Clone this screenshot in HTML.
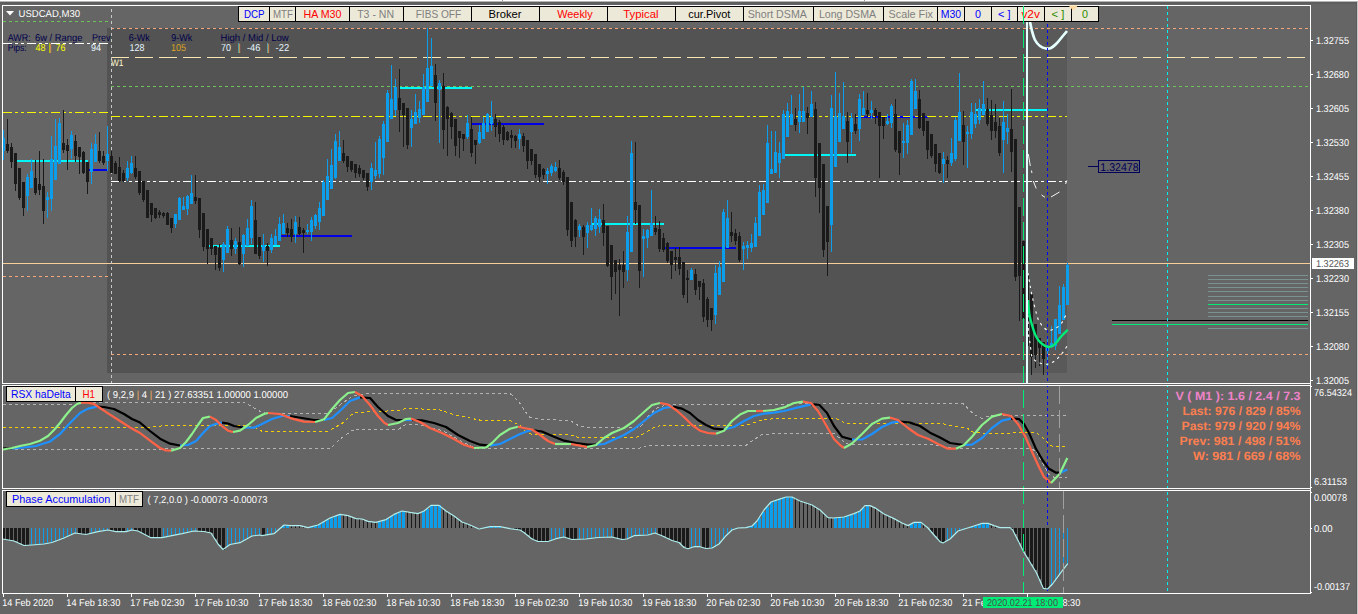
<!DOCTYPE html>
<html><head><meta charset="utf-8"><title>USDCAD,M30</title>
<style>html,body{margin:0;padding:0;background:#656565;overflow:hidden}svg{display:block}text{white-space:pre}</style></head>
<body>
<svg width="1358" height="614" viewBox="0 0 1358 614" font-family='"Liberation Sans", Arial, sans-serif'>
<g shape-rendering="crispEdges">
<rect x="0" y="0" width="1358" height="614" fill="#656565" />
<rect x="0" y="0" width="1358" height="1" fill="#FFFFFF" />
<rect x="0" y="1" width="1358" height="1" fill="#B4B4B4" />
<rect x="0" y="2" width="1358" height="2" fill="#5E5E5E" />
<rect x="502" y="0" width="1" height="1" fill="#999" />
<rect x="864" y="0" width="1" height="1" fill="#999" />
<rect x="1356" y="2" width="1" height="612" fill="#5A5A5A" />
<rect x="1357" y="2" width="1" height="612" fill="#C8C8C8" />
<rect x="107" y="28" width="921" height="345" fill="#535353" />
<rect x="1028" y="28" width="39" height="345" fill="#595959" />
<rect x="17" y="160" width="71" height="2" fill="#00F6F6" />
<rect x="88" y="169" width="19" height="2" fill="#0000E6" />
<rect x="208" y="245" width="72" height="2" fill="#00F6F6" />
<rect x="280" y="235" width="72" height="2" fill="#0000E6" />
<rect x="400" y="87" width="72" height="2" fill="#00F6F6" />
<rect x="472" y="123" width="72" height="2" fill="#0000E6" />
<rect x="591" y="223" width="73" height="2" fill="#00F6F6" />
<rect x="664" y="247" width="72" height="2" fill="#0000E6" />
<rect x="785" y="154" width="71" height="2" fill="#00F6F6" />
<rect x="856" y="116" width="72" height="2" fill="#0000E6" />
<rect x="976" y="109" width="71" height="2" fill="#00F6F6" />
<line x1="3" y1="21.5" x2="108" y2="21.5" stroke="#6CC45A" stroke-width="1" stroke-dasharray="3 3"/>
<line x1="3" y1="43.5" x2="108" y2="43.5" stroke="#FFFFFF" stroke-width="1" stroke-dasharray="9 3 3 3 3 3"/>
<line x1="3" y1="112.5" x2="108" y2="112.5" stroke="#F5F500" stroke-width="1" stroke-dasharray="9 3 3 3 3 3"/>
<line x1="3" y1="276.5" x2="108" y2="276.5" stroke="#F4A77C" stroke-width="1" stroke-dasharray="3 3"/>
<line x1="111" y1="28.5" x2="1310" y2="28.5" stroke="#F4A77C" stroke-width="1" stroke-dasharray="3 3"/>
<line x1="111" y1="57.5" x2="1310" y2="57.5" stroke="#F5E6B4" stroke-width="1" stroke-dasharray="18 6"/>
<line x1="111" y1="86.5" x2="1310" y2="86.5" stroke="#6CC45A" stroke-width="1" stroke-dasharray="3 3"/>
<line x1="111" y1="116.5" x2="1067" y2="116.5" stroke="#F5F500" stroke-width="1" stroke-dasharray="9 3 3 3 3 3"/>
<line x1="111" y1="181.5" x2="1067" y2="181.5" stroke="#FFFFFF" stroke-width="1" stroke-dasharray="9 3 3 3 3 3"/>
<line x1="111" y1="354.5" x2="1310" y2="354.5" stroke="#F4A77C" stroke-width="1" stroke-dasharray="3 3"/>
<line x1="3" y1="263.5" x2="1310" y2="263.5" stroke="#F8CE98" stroke-width="1"/>
<line x1="111.5" y1="9" x2="111.5" y2="383" stroke="#C8C8C8" stroke-width="1" stroke-dasharray="3 3"/>
<rect x="3" y="130" width="1" height="30" fill="#0C9DEB" />
<rect x="3" y="138" width="2" height="13" fill="#0C9DEB" />
<rect x="7" y="119" width="1" height="34" fill="#1A1A1A" />
<rect x="6" y="144" width="3" height="7" fill="#1A1A1A" />
<rect x="11" y="143" width="1" height="25" fill="#1A1A1A" />
<rect x="10" y="147" width="3" height="15" fill="#1A1A1A" />
<rect x="15" y="153" width="1" height="38" fill="#1A1A1A" />
<rect x="14" y="153" width="3" height="31" fill="#1A1A1A" />
<rect x="19" y="168" width="1" height="32" fill="#1A1A1A" />
<rect x="18" y="168" width="3" height="30" fill="#1A1A1A" />
<rect x="23" y="182" width="1" height="34" fill="#1A1A1A" />
<rect x="22" y="182" width="3" height="26" fill="#1A1A1A" />
<rect x="27" y="174" width="1" height="37" fill="#0C9DEB" />
<rect x="26" y="177" width="3" height="19" fill="#0C9DEB" />
<rect x="31" y="159" width="1" height="29" fill="#0C9DEB" />
<rect x="30" y="171" width="3" height="17" fill="#0C9DEB" />
<rect x="35" y="160" width="1" height="35" fill="#1A1A1A" />
<rect x="34" y="178" width="3" height="15" fill="#1A1A1A" />
<rect x="39" y="151" width="1" height="44" fill="#1A1A1A" />
<rect x="38" y="184" width="3" height="6" fill="#1A1A1A" />
<rect x="43" y="159" width="1" height="65" fill="#1A1A1A" />
<rect x="42" y="186" width="3" height="25" fill="#1A1A1A" />
<rect x="47" y="192" width="1" height="26" fill="#0C9DEB" />
<rect x="46" y="197" width="3" height="3" fill="#0C9DEB" />
<rect x="51" y="136" width="1" height="75" fill="#0C9DEB" />
<rect x="50" y="159" width="3" height="40" fill="#0C9DEB" />
<rect x="55" y="119" width="1" height="61" fill="#0C9DEB" />
<rect x="54" y="146" width="3" height="34" fill="#0C9DEB" />
<rect x="59" y="118" width="1" height="46" fill="#0C9DEB" />
<rect x="58" y="123" width="3" height="41" fill="#0C9DEB" />
<rect x="63" y="110" width="1" height="43" fill="#1A1A1A" />
<rect x="62" y="143" width="3" height="7" fill="#1A1A1A" />
<rect x="67" y="139" width="1" height="31" fill="#1A1A1A" />
<rect x="66" y="145" width="3" height="6" fill="#1A1A1A" />
<rect x="71" y="131" width="1" height="28" fill="#0C9DEB" />
<rect x="70" y="135" width="3" height="14" fill="#0C9DEB" />
<rect x="75" y="135" width="1" height="27" fill="#1A1A1A" />
<rect x="74" y="141" width="3" height="15" fill="#1A1A1A" />
<rect x="79" y="147" width="1" height="27" fill="#1A1A1A" />
<rect x="78" y="147" width="3" height="10" fill="#1A1A1A" />
<rect x="83" y="151" width="1" height="23" fill="#1A1A1A" />
<rect x="82" y="152" width="3" height="21" fill="#1A1A1A" />
<rect x="87" y="162" width="1" height="32" fill="#1A1A1A" />
<rect x="86" y="162" width="3" height="20" fill="#1A1A1A" />
<rect x="91" y="143" width="1" height="41" fill="#0C9DEB" />
<rect x="90" y="149" width="3" height="23" fill="#0C9DEB" />
<rect x="95" y="134" width="1" height="28" fill="#0C9DEB" />
<rect x="94" y="144" width="3" height="18" fill="#0C9DEB" />
<rect x="99" y="132" width="1" height="31" fill="#1A1A1A" />
<rect x="98" y="151" width="3" height="10" fill="#1A1A1A" />
<rect x="103" y="151" width="1" height="14" fill="#1A1A1A" />
<rect x="102" y="156" width="3" height="7" fill="#1A1A1A" />
<rect x="107" y="126" width="1" height="45" fill="#0C9DEB" />
<rect x="106" y="154" width="3" height="7" fill="#0C9DEB" />
<rect x="111" y="151" width="1" height="22" fill="#1A1A1A" />
<rect x="110" y="156" width="3" height="17" fill="#1A1A1A" />
<rect x="115" y="161" width="1" height="13" fill="#1A1A1A" />
<rect x="114" y="163" width="3" height="11" fill="#1A1A1A" />
<rect x="119" y="157" width="1" height="25" fill="#1A1A1A" />
<rect x="118" y="167" width="3" height="14" fill="#1A1A1A" />
<rect x="123" y="170" width="1" height="12" fill="#1A1A1A" />
<rect x="122" y="173" width="3" height="8" fill="#1A1A1A" />
<rect x="127" y="161" width="1" height="20" fill="#0C9DEB" />
<rect x="126" y="168" width="3" height="10" fill="#0C9DEB" />
<rect x="131" y="156" width="1" height="18" fill="#0C9DEB" />
<rect x="130" y="163" width="3" height="10" fill="#0C9DEB" />
<rect x="135" y="156" width="1" height="23" fill="#1A1A1A" />
<rect x="134" y="168" width="3" height="9" fill="#1A1A1A" />
<rect x="139" y="171" width="1" height="24" fill="#1A1A1A" />
<rect x="138" y="171" width="3" height="22" fill="#1A1A1A" />
<rect x="143" y="181" width="1" height="21" fill="#1A1A1A" />
<rect x="142" y="181" width="3" height="19" fill="#1A1A1A" />
<rect x="147" y="190" width="1" height="28" fill="#1A1A1A" />
<rect x="146" y="190" width="3" height="28" fill="#1A1A1A" />
<rect x="151" y="203" width="1" height="19" fill="#1A1A1A" />
<rect x="150" y="203" width="3" height="12" fill="#1A1A1A" />
<rect x="155" y="208" width="1" height="11" fill="#1A1A1A" />
<rect x="154" y="208" width="3" height="10" fill="#1A1A1A" />
<rect x="159" y="210" width="1" height="8" fill="#1A1A1A" />
<rect x="158" y="212" width="3" height="3" fill="#1A1A1A" />
<rect x="163" y="212" width="1" height="6" fill="#1A1A1A" />
<rect x="162" y="213" width="3" height="3" fill="#1A1A1A" />
<rect x="167" y="212" width="1" height="13" fill="#1A1A1A" />
<rect x="166" y="213" width="3" height="12" fill="#1A1A1A" />
<rect x="171" y="218" width="1" height="15" fill="#1A1A1A" />
<rect x="170" y="218" width="3" height="10" fill="#1A1A1A" />
<rect x="175" y="214" width="1" height="14" fill="#0C9DEB" />
<rect x="174" y="214" width="3" height="10" fill="#0C9DEB" />
<rect x="179" y="197" width="1" height="23" fill="#0C9DEB" />
<rect x="178" y="198" width="3" height="22" fill="#0C9DEB" />
<rect x="183" y="197" width="1" height="13" fill="#0C9DEB" />
<rect x="182" y="206" width="3" height="4" fill="#0C9DEB" />
<rect x="187" y="195" width="1" height="20" fill="#0C9DEB" />
<rect x="186" y="196" width="3" height="13" fill="#0C9DEB" />
<rect x="191" y="175" width="1" height="29" fill="#0C9DEB" />
<rect x="190" y="193" width="3" height="11" fill="#0C9DEB" />
<rect x="195" y="175" width="1" height="29" fill="#1A1A1A" />
<rect x="194" y="197" width="3" height="4" fill="#1A1A1A" />
<rect x="199" y="198" width="1" height="40" fill="#1A1A1A" />
<rect x="198" y="198" width="3" height="32" fill="#1A1A1A" />
<rect x="203" y="213" width="1" height="38" fill="#1A1A1A" />
<rect x="202" y="213" width="3" height="34" fill="#1A1A1A" />
<rect x="207" y="229" width="1" height="35" fill="#1A1A1A" />
<rect x="206" y="229" width="3" height="20" fill="#1A1A1A" />
<rect x="211" y="238" width="1" height="17" fill="#1A1A1A" />
<rect x="210" y="238" width="3" height="11" fill="#1A1A1A" />
<rect x="215" y="246" width="1" height="24" fill="#1A1A1A" />
<rect x="214" y="246" width="3" height="9" fill="#1A1A1A" />
<rect x="219" y="244" width="1" height="27" fill="#1A1A1A" />
<rect x="218" y="248" width="3" height="20" fill="#1A1A1A" />
<rect x="223" y="242" width="1" height="30" fill="#0C9DEB" />
<rect x="222" y="244" width="3" height="16" fill="#0C9DEB" />
<rect x="227" y="226" width="1" height="27" fill="#0C9DEB" />
<rect x="226" y="229" width="3" height="24" fill="#0C9DEB" />
<rect x="231" y="228" width="1" height="28" fill="#1A1A1A" />
<rect x="230" y="240" width="3" height="9" fill="#1A1A1A" />
<rect x="235" y="238" width="1" height="16" fill="#0C9DEB" />
<rect x="234" y="241" width="3" height="8" fill="#0C9DEB" />
<rect x="239" y="227" width="1" height="38" fill="#1A1A1A" />
<rect x="238" y="242" width="3" height="22" fill="#1A1A1A" />
<rect x="243" y="234" width="1" height="33" fill="#0C9DEB" />
<rect x="242" y="235" width="3" height="19" fill="#0C9DEB" />
<rect x="247" y="219" width="1" height="27" fill="#0C9DEB" />
<rect x="246" y="228" width="3" height="18" fill="#0C9DEB" />
<rect x="251" y="200" width="1" height="44" fill="#0C9DEB" />
<rect x="250" y="206" width="3" height="32" fill="#0C9DEB" />
<rect x="255" y="202" width="1" height="52" fill="#1A1A1A" />
<rect x="254" y="220" width="3" height="34" fill="#1A1A1A" />
<rect x="259" y="237" width="1" height="22" fill="#1A1A1A" />
<rect x="258" y="237" width="3" height="19" fill="#1A1A1A" />
<rect x="263" y="234" width="1" height="28" fill="#0C9DEB" />
<rect x="262" y="245" width="3" height="6" fill="#0C9DEB" />
<rect x="267" y="243" width="1" height="23" fill="#1A1A1A" />
<rect x="266" y="246" width="3" height="5" fill="#1A1A1A" />
<rect x="271" y="234" width="1" height="19" fill="#0C9DEB" />
<rect x="270" y="238" width="3" height="12" fill="#0C9DEB" />
<rect x="275" y="229" width="1" height="16" fill="#0C9DEB" />
<rect x="274" y="236" width="3" height="9" fill="#0C9DEB" />
<rect x="279" y="217" width="1" height="24" fill="#0C9DEB" />
<rect x="278" y="224" width="3" height="17" fill="#0C9DEB" />
<rect x="283" y="214" width="1" height="20" fill="#0C9DEB" />
<rect x="282" y="223" width="3" height="11" fill="#0C9DEB" />
<rect x="287" y="223" width="1" height="14" fill="#1A1A1A" />
<rect x="286" y="228" width="3" height="5" fill="#1A1A1A" />
<rect x="291" y="219" width="1" height="23" fill="#1A1A1A" />
<rect x="290" y="229" width="3" height="8" fill="#1A1A1A" />
<rect x="295" y="216" width="1" height="27" fill="#0C9DEB" />
<rect x="294" y="222" width="3" height="12" fill="#0C9DEB" />
<rect x="299" y="217" width="1" height="18" fill="#1A1A1A" />
<rect x="298" y="227" width="3" height="7" fill="#1A1A1A" />
<rect x="303" y="228" width="1" height="25" fill="#1A1A1A" />
<rect x="302" y="230" width="3" height="3" fill="#1A1A1A" />
<rect x="307" y="224" width="1" height="10" fill="#0C9DEB" />
<rect x="306" y="230" width="3" height="2" fill="#0C9DEB" />
<rect x="311" y="217" width="1" height="24" fill="#0C9DEB" />
<rect x="310" y="220" width="3" height="12" fill="#0C9DEB" />
<rect x="315" y="214" width="1" height="15" fill="#0C9DEB" />
<rect x="314" y="215" width="3" height="11" fill="#0C9DEB" />
<rect x="319" y="202" width="1" height="28" fill="#0C9DEB" />
<rect x="318" y="208" width="3" height="14" fill="#0C9DEB" />
<rect x="323" y="180" width="1" height="36" fill="#0C9DEB" />
<rect x="322" y="182" width="3" height="34" fill="#0C9DEB" />
<rect x="327" y="159" width="1" height="41" fill="#0C9DEB" />
<rect x="326" y="176" width="3" height="24" fill="#0C9DEB" />
<rect x="331" y="149" width="1" height="40" fill="#0C9DEB" />
<rect x="330" y="165" width="3" height="24" fill="#0C9DEB" />
<rect x="335" y="134" width="1" height="45" fill="#0C9DEB" />
<rect x="334" y="141" width="3" height="37" fill="#0C9DEB" />
<rect x="339" y="131" width="1" height="30" fill="#0C9DEB" />
<rect x="338" y="147" width="3" height="14" fill="#0C9DEB" />
<rect x="343" y="140" width="1" height="23" fill="#1A1A1A" />
<rect x="342" y="153" width="3" height="8" fill="#1A1A1A" />
<rect x="347" y="156" width="1" height="16" fill="#1A1A1A" />
<rect x="346" y="156" width="3" height="11" fill="#1A1A1A" />
<rect x="351" y="161" width="1" height="11" fill="#1A1A1A" />
<rect x="350" y="161" width="3" height="9" fill="#1A1A1A" />
<rect x="355" y="164" width="1" height="14" fill="#1A1A1A" />
<rect x="354" y="164" width="3" height="9" fill="#1A1A1A" />
<rect x="359" y="165" width="1" height="12" fill="#1A1A1A" />
<rect x="358" y="168" width="3" height="6" fill="#1A1A1A" />
<rect x="363" y="170" width="1" height="10" fill="#1A1A1A" />
<rect x="362" y="170" width="3" height="8" fill="#1A1A1A" />
<rect x="367" y="173" width="1" height="18" fill="#1A1A1A" />
<rect x="366" y="173" width="3" height="14" fill="#1A1A1A" />
<rect x="371" y="163" width="1" height="27" fill="#0C9DEB" />
<rect x="370" y="168" width="3" height="14" fill="#0C9DEB" />
<rect x="375" y="142" width="1" height="37" fill="#0C9DEB" />
<rect x="374" y="170" width="3" height="6" fill="#0C9DEB" />
<rect x="379" y="136" width="1" height="42" fill="#0C9DEB" />
<rect x="378" y="139" width="3" height="35" fill="#0C9DEB" />
<rect x="383" y="121" width="1" height="54" fill="#0C9DEB" />
<rect x="382" y="124" width="3" height="34" fill="#0C9DEB" />
<rect x="387" y="90" width="1" height="52" fill="#0C9DEB" />
<rect x="386" y="93" width="3" height="49" fill="#0C9DEB" />
<rect x="391" y="65" width="1" height="54" fill="#0C9DEB" />
<rect x="390" y="99" width="3" height="20" fill="#0C9DEB" />
<rect x="395" y="79" width="1" height="37" fill="#0C9DEB" />
<rect x="394" y="87" width="3" height="23" fill="#0C9DEB" />
<rect x="399" y="69" width="1" height="63" fill="#1A1A1A" />
<rect x="398" y="98" width="3" height="12" fill="#1A1A1A" />
<rect x="403" y="103" width="1" height="44" fill="#1A1A1A" />
<rect x="402" y="103" width="3" height="12" fill="#1A1A1A" />
<rect x="407" y="108" width="1" height="41" fill="#1A1A1A" />
<rect x="406" y="108" width="3" height="37" fill="#1A1A1A" />
<rect x="411" y="110" width="1" height="37" fill="#0C9DEB" />
<rect x="410" y="119" width="3" height="9" fill="#0C9DEB" />
<rect x="415" y="94" width="1" height="30" fill="#0C9DEB" />
<rect x="414" y="112" width="3" height="12" fill="#0C9DEB" />
<rect x="419" y="101" width="1" height="22" fill="#0C9DEB" />
<rect x="418" y="109" width="3" height="9" fill="#0C9DEB" />
<rect x="423" y="74" width="1" height="41" fill="#0C9DEB" />
<rect x="422" y="87" width="3" height="28" fill="#0C9DEB" />
<rect x="427" y="28" width="1" height="74" fill="#0C9DEB" />
<rect x="426" y="68" width="3" height="34" fill="#0C9DEB" />
<rect x="431" y="38" width="1" height="48" fill="#0C9DEB" />
<rect x="430" y="66" width="3" height="20" fill="#0C9DEB" />
<rect x="435" y="64" width="1" height="57" fill="#1A1A1A" />
<rect x="434" y="75" width="3" height="28" fill="#1A1A1A" />
<rect x="439" y="80" width="1" height="63" fill="#0C9DEB" />
<rect x="438" y="83" width="3" height="7" fill="#0C9DEB" />
<rect x="443" y="73" width="1" height="76" fill="#1A1A1A" />
<rect x="442" y="86" width="3" height="44" fill="#1A1A1A" />
<rect x="447" y="106" width="1" height="50" fill="#1A1A1A" />
<rect x="446" y="107" width="3" height="12" fill="#1A1A1A" />
<rect x="451" y="112" width="1" height="27" fill="#1A1A1A" />
<rect x="450" y="113" width="3" height="14" fill="#1A1A1A" />
<rect x="455" y="119" width="1" height="37" fill="#1A1A1A" />
<rect x="454" y="119" width="3" height="27" fill="#1A1A1A" />
<rect x="459" y="131" width="1" height="27" fill="#1A1A1A" />
<rect x="458" y="131" width="3" height="7" fill="#1A1A1A" />
<rect x="463" y="134" width="1" height="17" fill="#1A1A1A" />
<rect x="462" y="134" width="3" height="5" fill="#1A1A1A" />
<rect x="467" y="115" width="1" height="24" fill="#0C9DEB" />
<rect x="466" y="123" width="3" height="14" fill="#0C9DEB" />
<rect x="471" y="117" width="1" height="40" fill="#1A1A1A" />
<rect x="470" y="129" width="3" height="24" fill="#1A1A1A" />
<rect x="475" y="140" width="1" height="24" fill="#1A1A1A" />
<rect x="474" y="140" width="3" height="5" fill="#1A1A1A" />
<rect x="479" y="125" width="1" height="19" fill="#0C9DEB" />
<rect x="478" y="132" width="3" height="11" fill="#0C9DEB" />
<rect x="483" y="117" width="1" height="22" fill="#0C9DEB" />
<rect x="482" y="123" width="3" height="16" fill="#0C9DEB" />
<rect x="487" y="113" width="1" height="19" fill="#0C9DEB" />
<rect x="486" y="114" width="3" height="18" fill="#0C9DEB" />
<rect x="491" y="101" width="1" height="30" fill="#0C9DEB" />
<rect x="490" y="117" width="3" height="7" fill="#0C9DEB" />
<rect x="495" y="114" width="1" height="23" fill="#1A1A1A" />
<rect x="494" y="119" width="3" height="8" fill="#1A1A1A" />
<rect x="499" y="120" width="1" height="22" fill="#1A1A1A" />
<rect x="498" y="122" width="3" height="12" fill="#1A1A1A" />
<rect x="503" y="125" width="1" height="20" fill="#1A1A1A" />
<rect x="502" y="127" width="3" height="13" fill="#1A1A1A" />
<rect x="507" y="131" width="1" height="10" fill="#1A1A1A" />
<rect x="506" y="132" width="3" height="8" fill="#1A1A1A" />
<rect x="511" y="130" width="1" height="18" fill="#1A1A1A" />
<rect x="510" y="135" width="3" height="3" fill="#1A1A1A" />
<rect x="515" y="135" width="1" height="13" fill="#1A1A1A" />
<rect x="514" y="136" width="3" height="5" fill="#1A1A1A" />
<rect x="519" y="129" width="1" height="20" fill="#0C9DEB" />
<rect x="518" y="134" width="3" height="5" fill="#0C9DEB" />
<rect x="523" y="133" width="1" height="19" fill="#1A1A1A" />
<rect x="522" y="136" width="3" height="10" fill="#1A1A1A" />
<rect x="527" y="140" width="1" height="29" fill="#1A1A1A" />
<rect x="526" y="140" width="3" height="21" fill="#1A1A1A" />
<rect x="531" y="149" width="1" height="16" fill="#1A1A1A" />
<rect x="530" y="149" width="3" height="12" fill="#1A1A1A" />
<rect x="535" y="154" width="1" height="24" fill="#1A1A1A" />
<rect x="534" y="154" width="3" height="21" fill="#1A1A1A" />
<rect x="539" y="164" width="1" height="18" fill="#1A1A1A" />
<rect x="538" y="164" width="3" height="13" fill="#1A1A1A" />
<rect x="543" y="168" width="1" height="11" fill="#1A1A1A" />
<rect x="542" y="169" width="3" height="6" fill="#1A1A1A" />
<rect x="547" y="168" width="1" height="16" fill="#0C9DEB" />
<rect x="546" y="171" width="3" height="3" fill="#0C9DEB" />
<rect x="551" y="164" width="1" height="12" fill="#0C9DEB" />
<rect x="550" y="166" width="3" height="7" fill="#0C9DEB" />
<rect x="555" y="162" width="1" height="10" fill="#0C9DEB" />
<rect x="554" y="167" width="3" height="4" fill="#0C9DEB" />
<rect x="559" y="160" width="1" height="20" fill="#1A1A1A" />
<rect x="558" y="168" width="3" height="10" fill="#1A1A1A" />
<rect x="563" y="170" width="1" height="15" fill="#1A1A1A" />
<rect x="562" y="172" width="3" height="10" fill="#1A1A1A" />
<rect x="567" y="177" width="1" height="59" fill="#1A1A1A" />
<rect x="566" y="177" width="3" height="53" fill="#1A1A1A" />
<rect x="571" y="202" width="1" height="45" fill="#1A1A1A" />
<rect x="570" y="202" width="3" height="39" fill="#1A1A1A" />
<rect x="575" y="219" width="1" height="28" fill="#1A1A1A" />
<rect x="574" y="220" width="3" height="17" fill="#1A1A1A" />
<rect x="579" y="224" width="1" height="13" fill="#0C9DEB" />
<rect x="578" y="226" width="3" height="4" fill="#0C9DEB" />
<rect x="583" y="225" width="1" height="30" fill="#1A1A1A" />
<rect x="582" y="227" width="3" height="10" fill="#1A1A1A" />
<rect x="587" y="222" width="1" height="26" fill="#0C9DEB" />
<rect x="586" y="225" width="3" height="8" fill="#0C9DEB" />
<rect x="591" y="208" width="1" height="23" fill="#0C9DEB" />
<rect x="590" y="225" width="3" height="5" fill="#0C9DEB" />
<rect x="595" y="216" width="1" height="20" fill="#0C9DEB" />
<rect x="594" y="218" width="3" height="11" fill="#0C9DEB" />
<rect x="599" y="209" width="1" height="24" fill="#0C9DEB" />
<rect x="598" y="219" width="3" height="8" fill="#0C9DEB" />
<rect x="603" y="204" width="1" height="42" fill="#1A1A1A" />
<rect x="602" y="220" width="3" height="13" fill="#1A1A1A" />
<rect x="607" y="226" width="1" height="41" fill="#1A1A1A" />
<rect x="606" y="226" width="3" height="40" fill="#1A1A1A" />
<rect x="611" y="245" width="1" height="55" fill="#1A1A1A" />
<rect x="610" y="245" width="3" height="32" fill="#1A1A1A" />
<rect x="615" y="260" width="1" height="34" fill="#1A1A1A" />
<rect x="614" y="260" width="3" height="12" fill="#1A1A1A" />
<rect x="619" y="259" width="1" height="57" fill="#1A1A1A" />
<rect x="618" y="265" width="3" height="5" fill="#1A1A1A" />
<rect x="623" y="251" width="1" height="37" fill="#1A1A1A" />
<rect x="622" y="265" width="3" height="7" fill="#1A1A1A" />
<rect x="627" y="216" width="1" height="65" fill="#0C9DEB" />
<rect x="626" y="232" width="3" height="38" fill="#0C9DEB" />
<rect x="631" y="141" width="1" height="111" fill="#0C9DEB" />
<rect x="630" y="153" width="3" height="99" fill="#0C9DEB" />
<rect x="635" y="142" width="1" height="82" fill="#1A1A1A" />
<rect x="634" y="202" width="3" height="8" fill="#1A1A1A" />
<rect x="639" y="205" width="1" height="83" fill="#1A1A1A" />
<rect x="638" y="205" width="3" height="66" fill="#1A1A1A" />
<rect x="643" y="229" width="1" height="48" fill="#0C9DEB" />
<rect x="642" y="236" width="3" height="3" fill="#0C9DEB" />
<rect x="647" y="229" width="1" height="19" fill="#0C9DEB" />
<rect x="646" y="230" width="3" height="8" fill="#0C9DEB" />
<rect x="651" y="190" width="1" height="46" fill="#0C9DEB" />
<rect x="650" y="223" width="3" height="13" fill="#0C9DEB" />
<rect x="655" y="216" width="1" height="19" fill="#1A1A1A" />
<rect x="654" y="228" width="3" height="4" fill="#1A1A1A" />
<rect x="659" y="221" width="1" height="31" fill="#1A1A1A" />
<rect x="658" y="229" width="3" height="20" fill="#1A1A1A" />
<rect x="663" y="233" width="1" height="19" fill="#1A1A1A" />
<rect x="662" y="238" width="3" height="12" fill="#1A1A1A" />
<rect x="667" y="242" width="1" height="21" fill="#1A1A1A" />
<rect x="666" y="243" width="3" height="18" fill="#1A1A1A" />
<rect x="671" y="251" width="1" height="28" fill="#1A1A1A" />
<rect x="670" y="251" width="3" height="14" fill="#1A1A1A" />
<rect x="675" y="248" width="1" height="23" fill="#1A1A1A" />
<rect x="674" y="257" width="3" height="3" fill="#1A1A1A" />
<rect x="679" y="247" width="1" height="28" fill="#1A1A1A" />
<rect x="678" y="257" width="3" height="12" fill="#1A1A1A" />
<rect x="683" y="262" width="1" height="36" fill="#1A1A1A" />
<rect x="682" y="262" width="3" height="33" fill="#1A1A1A" />
<rect x="687" y="270" width="1" height="33" fill="#1A1A1A" />
<rect x="686" y="278" width="3" height="2" fill="#1A1A1A" />
<rect x="691" y="268" width="1" height="12" fill="#0C9DEB" />
<rect x="690" y="270" width="3" height="10" fill="#0C9DEB" />
<rect x="695" y="269" width="1" height="26" fill="#1A1A1A" />
<rect x="694" y="274" width="3" height="16" fill="#1A1A1A" />
<rect x="699" y="281" width="1" height="19" fill="#1A1A1A" />
<rect x="698" y="281" width="3" height="6" fill="#1A1A1A" />
<rect x="703" y="279" width="1" height="43" fill="#1A1A1A" />
<rect x="702" y="283" width="3" height="34" fill="#1A1A1A" />
<rect x="707" y="297" width="1" height="30" fill="#1A1A1A" />
<rect x="706" y="299" width="3" height="21" fill="#1A1A1A" />
<rect x="711" y="308" width="1" height="23" fill="#1A1A1A" />
<rect x="710" y="308" width="3" height="12" fill="#1A1A1A" />
<rect x="715" y="265" width="1" height="59" fill="#0C9DEB" />
<rect x="714" y="273" width="3" height="42" fill="#0C9DEB" />
<rect x="719" y="261" width="1" height="34" fill="#0C9DEB" />
<rect x="718" y="267" width="3" height="28" fill="#0C9DEB" />
<rect x="723" y="209" width="1" height="73" fill="#0C9DEB" />
<rect x="722" y="212" width="3" height="70" fill="#0C9DEB" />
<rect x="727" y="200" width="1" height="48" fill="#0C9DEB" />
<rect x="726" y="218" width="3" height="30" fill="#0C9DEB" />
<rect x="731" y="212" width="1" height="30" fill="#1A1A1A" />
<rect x="730" y="232" width="3" height="4" fill="#1A1A1A" />
<rect x="735" y="229" width="1" height="16" fill="#1A1A1A" />
<rect x="734" y="233" width="3" height="8" fill="#1A1A1A" />
<rect x="739" y="232" width="1" height="30" fill="#1A1A1A" />
<rect x="738" y="236" width="3" height="24" fill="#1A1A1A" />
<rect x="743" y="242" width="1" height="28" fill="#0C9DEB" />
<rect x="742" y="246" width="3" height="3" fill="#0C9DEB" />
<rect x="747" y="241" width="1" height="18" fill="#0C9DEB" />
<rect x="746" y="245" width="3" height="3" fill="#0C9DEB" />
<rect x="751" y="234" width="1" height="18" fill="#0C9DEB" />
<rect x="750" y="243" width="3" height="5" fill="#0C9DEB" />
<rect x="755" y="217" width="1" height="30" fill="#0C9DEB" />
<rect x="754" y="223" width="3" height="24" fill="#0C9DEB" />
<rect x="759" y="185" width="1" height="51" fill="#0C9DEB" />
<rect x="758" y="192" width="3" height="44" fill="#0C9DEB" />
<rect x="763" y="184" width="1" height="31" fill="#0C9DEB" />
<rect x="762" y="190" width="3" height="25" fill="#0C9DEB" />
<rect x="767" y="125" width="1" height="78" fill="#0C9DEB" />
<rect x="766" y="143" width="3" height="60" fill="#0C9DEB" />
<rect x="771" y="131" width="1" height="43" fill="#0C9DEB" />
<rect x="770" y="169" width="3" height="5" fill="#0C9DEB" />
<rect x="775" y="131" width="1" height="42" fill="#0C9DEB" />
<rect x="774" y="152" width="3" height="21" fill="#0C9DEB" />
<rect x="779" y="142" width="1" height="36" fill="#0C9DEB" />
<rect x="778" y="153" width="3" height="10" fill="#0C9DEB" />
<rect x="783" y="110" width="1" height="49" fill="#0C9DEB" />
<rect x="782" y="114" width="3" height="45" fill="#0C9DEB" />
<rect x="787" y="103" width="1" height="34" fill="#0C9DEB" />
<rect x="786" y="111" width="3" height="26" fill="#0C9DEB" />
<rect x="791" y="95" width="1" height="30" fill="#0C9DEB" />
<rect x="790" y="114" width="3" height="11" fill="#0C9DEB" />
<rect x="795" y="108" width="1" height="23" fill="#1A1A1A" />
<rect x="794" y="119" width="3" height="6" fill="#1A1A1A" />
<rect x="799" y="94" width="1" height="39" fill="#0C9DEB" />
<rect x="798" y="111" width="3" height="11" fill="#0C9DEB" />
<rect x="803" y="87" width="1" height="35" fill="#0C9DEB" />
<rect x="802" y="111" width="3" height="11" fill="#0C9DEB" />
<rect x="807" y="107" width="1" height="27" fill="#1A1A1A" />
<rect x="806" y="113" width="3" height="5" fill="#1A1A1A" />
<rect x="811" y="91" width="1" height="26" fill="#0C9DEB" />
<rect x="810" y="104" width="3" height="13" fill="#0C9DEB" />
<rect x="815" y="102" width="1" height="95" fill="#1A1A1A" />
<rect x="814" y="109" width="3" height="69" fill="#1A1A1A" />
<rect x="819" y="143" width="1" height="70" fill="#1A1A1A" />
<rect x="818" y="143" width="3" height="45" fill="#1A1A1A" />
<rect x="823" y="164" width="1" height="93" fill="#1A1A1A" />
<rect x="822" y="164" width="3" height="86" fill="#1A1A1A" />
<rect x="827" y="206" width="1" height="70" fill="#1A1A1A" />
<rect x="826" y="206" width="3" height="36" fill="#1A1A1A" />
<rect x="831" y="95" width="1" height="157" fill="#0C9DEB" />
<rect x="830" y="108" width="3" height="117" fill="#0C9DEB" />
<rect x="835" y="72" width="1" height="95" fill="#0C9DEB" />
<rect x="834" y="116" width="3" height="51" fill="#0C9DEB" />
<rect x="839" y="93" width="1" height="49" fill="#0C9DEB" />
<rect x="838" y="113" width="3" height="29" fill="#0C9DEB" />
<rect x="843" y="82" width="1" height="47" fill="#0C9DEB" />
<rect x="842" y="116" width="3" height="13" fill="#0C9DEB" />
<rect x="847" y="112" width="1" height="51" fill="#1A1A1A" />
<rect x="846" y="121" width="3" height="21" fill="#1A1A1A" />
<rect x="851" y="113" width="1" height="40" fill="#0C9DEB" />
<rect x="850" y="118" width="3" height="14" fill="#0C9DEB" />
<rect x="855" y="114" width="1" height="20" fill="#1A1A1A" />
<rect x="854" y="124" width="3" height="7" fill="#1A1A1A" />
<rect x="859" y="94" width="1" height="47" fill="#0C9DEB" />
<rect x="858" y="99" width="3" height="30" fill="#0C9DEB" />
<rect x="863" y="91" width="1" height="24" fill="#0C9DEB" />
<rect x="862" y="108" width="3" height="7" fill="#0C9DEB" />
<rect x="867" y="93" width="1" height="24" fill="#1A1A1A" />
<rect x="866" y="110" width="3" height="4" fill="#1A1A1A" />
<rect x="871" y="101" width="1" height="18" fill="#0C9DEB" />
<rect x="870" y="110" width="3" height="3" fill="#0C9DEB" />
<rect x="875" y="108" width="1" height="16" fill="#1A1A1A" />
<rect x="874" y="110" width="3" height="6" fill="#1A1A1A" />
<rect x="879" y="112" width="1" height="66" fill="#1A1A1A" />
<rect x="878" y="112" width="3" height="14" fill="#1A1A1A" />
<rect x="883" y="117" width="1" height="22" fill="#1A1A1A" />
<rect x="882" y="117" width="3" height="9" fill="#1A1A1A" />
<rect x="887" y="114" width="1" height="11" fill="#0C9DEB" />
<rect x="886" y="121" width="3" height="3" fill="#0C9DEB" />
<rect x="891" y="104" width="1" height="24" fill="#0C9DEB" />
<rect x="890" y="106" width="3" height="17" fill="#0C9DEB" />
<rect x="895" y="99" width="1" height="53" fill="#1A1A1A" />
<rect x="894" y="114" width="3" height="36" fill="#1A1A1A" />
<rect x="899" y="131" width="1" height="44" fill="#1A1A1A" />
<rect x="898" y="131" width="3" height="22" fill="#1A1A1A" />
<rect x="903" y="123" width="1" height="35" fill="#0C9DEB" />
<rect x="902" y="141" width="3" height="2" fill="#0C9DEB" />
<rect x="907" y="120" width="1" height="34" fill="#0C9DEB" />
<rect x="906" y="125" width="3" height="18" fill="#0C9DEB" />
<rect x="911" y="79" width="1" height="56" fill="#0C9DEB" />
<rect x="910" y="81" width="3" height="54" fill="#0C9DEB" />
<rect x="915" y="79" width="1" height="30" fill="#0C9DEB" />
<rect x="914" y="91" width="3" height="18" fill="#0C9DEB" />
<rect x="919" y="90" width="1" height="39" fill="#1A1A1A" />
<rect x="918" y="99" width="3" height="29" fill="#1A1A1A" />
<rect x="923" y="113" width="1" height="23" fill="#1A1A1A" />
<rect x="922" y="113" width="3" height="18" fill="#1A1A1A" />
<rect x="927" y="121" width="1" height="38" fill="#1A1A1A" />
<rect x="926" y="121" width="3" height="29" fill="#1A1A1A" />
<rect x="931" y="134" width="1" height="24" fill="#1A1A1A" />
<rect x="930" y="134" width="3" height="22" fill="#1A1A1A" />
<rect x="935" y="144" width="1" height="28" fill="#1A1A1A" />
<rect x="934" y="144" width="3" height="20" fill="#1A1A1A" />
<rect x="939" y="153" width="1" height="21" fill="#1A1A1A" />
<rect x="938" y="153" width="3" height="20" fill="#1A1A1A" />
<rect x="943" y="152" width="1" height="31" fill="#0C9DEB" />
<rect x="942" y="159" width="3" height="5" fill="#0C9DEB" />
<rect x="947" y="156" width="1" height="22" fill="#1A1A1A" />
<rect x="946" y="160" width="3" height="4" fill="#1A1A1A" />
<rect x="951" y="138" width="1" height="28" fill="#0C9DEB" />
<rect x="950" y="153" width="3" height="10" fill="#0C9DEB" />
<rect x="955" y="117" width="1" height="44" fill="#0C9DEB" />
<rect x="954" y="120" width="3" height="39" fill="#0C9DEB" />
<rect x="959" y="73" width="1" height="68" fill="#0C9DEB" />
<rect x="958" y="112" width="3" height="29" fill="#0C9DEB" />
<rect x="963" y="111" width="1" height="54" fill="#1A1A1A" />
<rect x="962" y="125" width="3" height="17" fill="#1A1A1A" />
<rect x="967" y="126" width="1" height="42" fill="#0C9DEB" />
<rect x="966" y="132" width="3" height="2" fill="#0C9DEB" />
<rect x="971" y="103" width="1" height="36" fill="#0C9DEB" />
<rect x="970" y="112" width="3" height="22" fill="#0C9DEB" />
<rect x="975" y="103" width="1" height="25" fill="#0C9DEB" />
<rect x="974" y="114" width="3" height="10" fill="#0C9DEB" />
<rect x="979" y="99" width="1" height="25" fill="#0C9DEB" />
<rect x="978" y="108" width="3" height="12" fill="#0C9DEB" />
<rect x="983" y="81" width="1" height="34" fill="#0C9DEB" />
<rect x="982" y="104" width="3" height="11" fill="#0C9DEB" />
<rect x="987" y="98" width="1" height="28" fill="#1A1A1A" />
<rect x="986" y="109" width="3" height="15" fill="#1A1A1A" />
<rect x="991" y="100" width="1" height="40" fill="#1A1A1A" />
<rect x="990" y="115" width="3" height="16" fill="#1A1A1A" />
<rect x="995" y="104" width="1" height="34" fill="#1A1A1A" />
<rect x="994" y="122" width="3" height="9" fill="#1A1A1A" />
<rect x="999" y="118" width="1" height="38" fill="#1A1A1A" />
<rect x="998" y="126" width="3" height="27" fill="#1A1A1A" />
<rect x="1003" y="101" width="1" height="72" fill="#0C9DEB" />
<rect x="1002" y="122" width="3" height="18" fill="#0C9DEB" />
<rect x="1007" y="114" width="1" height="30" fill="#0C9DEB" />
<rect x="1006" y="128" width="3" height="4" fill="#0C9DEB" />
<rect x="1011" y="89" width="1" height="83" fill="#1A1A1A" />
<rect x="1010" y="129" width="3" height="23" fill="#1A1A1A" />
<rect x="1015" y="139" width="1" height="142" fill="#1A1A1A" />
<rect x="1014" y="139" width="3" height="138" fill="#1A1A1A" />
<rect x="1019" y="207" width="1" height="114" fill="#1A1A1A" />
<rect x="1018" y="207" width="3" height="69" fill="#1A1A1A" />
<rect x="1023" y="241" width="1" height="90" fill="#1A1A1A" />
<rect x="1022" y="241" width="3" height="78" fill="#1A1A1A" />
<rect x="1027" y="275" width="1" height="78" fill="#1A1A1A" />
<rect x="1026" y="275" width="3" height="71" fill="#1A1A1A" />
<rect x="1031" y="294" width="1" height="81" fill="#1A1A1A" />
<rect x="1030" y="294" width="3" height="63" fill="#1A1A1A" />
<rect x="1035" y="324" width="1" height="44" fill="#1A1A1A" />
<rect x="1034" y="324" width="3" height="31" fill="#1A1A1A" />
<rect x="1039" y="338" width="1" height="28" fill="#1A1A1A" />
<rect x="1038" y="338" width="3" height="10" fill="#1A1A1A" />
<rect x="1043" y="342" width="1" height="33" fill="#1A1A1A" />
<rect x="1042" y="342" width="3" height="17" fill="#1A1A1A" />
<rect x="1047" y="337" width="1" height="29" fill="#0C9DEB" />
<rect x="1046" y="348" width="3" height="3" fill="#0C9DEB" />
<rect x="1051" y="326" width="1" height="21" fill="#0C9DEB" />
<rect x="1050" y="343" width="3" height="4" fill="#0C9DEB" />
<rect x="1055" y="319" width="1" height="31" fill="#0C9DEB" />
<rect x="1054" y="319" width="3" height="27" fill="#0C9DEB" />
<rect x="1059" y="286" width="1" height="48" fill="#0C9DEB" />
<rect x="1058" y="305" width="3" height="29" fill="#0C9DEB" />
<rect x="1063" y="284" width="1" height="36" fill="#0C9DEB" />
<rect x="1062" y="287" width="3" height="33" fill="#0C9DEB" />
<rect x="1067" y="263" width="1" height="42" fill="#0C9DEB" />
<rect x="1066" y="265" width="3" height="40" fill="#0C9DEB" />
<line x1="1208" y1="275.5" x2="1308" y2="275.5" stroke="#7A9292" stroke-width="1"/>
<line x1="1208" y1="279.5" x2="1308" y2="279.5" stroke="#7A9292" stroke-width="1"/>
<line x1="1208" y1="283.5" x2="1308" y2="283.5" stroke="#7A9292" stroke-width="1"/>
<line x1="1208" y1="287.5" x2="1308" y2="287.5" stroke="#7A9292" stroke-width="1"/>
<line x1="1208" y1="291.5" x2="1308" y2="291.5" stroke="#7A9292" stroke-width="1"/>
<line x1="1208" y1="296.5" x2="1308" y2="296.5" stroke="#7A9292" stroke-width="1"/>
<line x1="1208" y1="300.5" x2="1308" y2="300.5" stroke="#7A9292" stroke-width="1"/>
<line x1="1208" y1="308.5" x2="1308" y2="308.5" stroke="#7A9292" stroke-width="1"/>
<line x1="1208" y1="312.5" x2="1308" y2="312.5" stroke="#7A9292" stroke-width="1"/>
<line x1="1208" y1="316.5" x2="1308" y2="316.5" stroke="#7A9292" stroke-width="1"/>
<line x1="1208" y1="328.5" x2="1308" y2="328.5" stroke="#7A9292" stroke-width="1"/>
<line x1="1208" y1="304.5" x2="1308" y2="304.5" stroke="#00EB78" stroke-width="1"/>
<line x1="1112" y1="320.5" x2="1308" y2="320.5" stroke="#000000" stroke-width="1"/>
<line x1="1112" y1="324.5" x2="1308" y2="324.5" stroke="#00EB78" stroke-width="1"/>
</g>
<path d="M1030.0,22.0 C1030.3,23.5 1031.2,28.0 1032.0,31.0 C1032.8,34.0 1033.7,37.5 1035.0,40.0 C1036.3,42.5 1038.2,44.6 1040.0,46.0 C1041.8,47.4 1044.2,48.2 1046.0,48.5 C1047.8,48.8 1049.2,48.9 1051.0,48.0 C1052.8,47.1 1055.2,44.8 1057.0,43.0 C1058.8,41.2 1060.3,39.0 1062.0,37.0 C1063.7,35.0 1066.2,32.0 1067.0,31.0" fill="none" stroke="#E6FFFF" stroke-width="2.7" stroke-linejoin="round" />
<line x1="1028.3" y1="154" x2="1030.3" y2="166" stroke="#F4F4F4" stroke-width="1"/>
<line x1="1031.5" y1="170.5" x2="1031.9" y2="173" stroke="#F4F4F4" stroke-width="1"/>
<line x1="1033.3" y1="181" x2="1036.2" y2="188.5" stroke="#F4F4F4" stroke-width="1"/>
<line x1="1041.5" y1="195" x2="1045" y2="197.3" stroke="#F4F4F4" stroke-width="1"/>
<line x1="1051" y1="197" x2="1059.5" y2="192" stroke="#F4F4F4" stroke-width="1"/>
<line x1="1065.6" y1="184" x2="1066.8" y2="180.5" stroke="#F4F4F4" stroke-width="1"/>
<path d="M1028.0,273.0 C1028.3,275.0 1029.2,280.5 1030.0,285.0 C1030.8,289.5 1031.8,294.6 1033.0,300.0 C1034.2,305.4 1036.5,313.9 1037.5,317.3 C1038.5,320.8 1038.4,319.2 1039.2,320.7 C1040.0,322.2 1041.1,324.8 1042.6,326.4 C1044.1,328.0 1046.3,330.0 1048.3,330.4 C1050.3,330.8 1052.6,329.6 1054.6,328.7 C1056.6,327.8 1058.7,326.4 1060.3,324.7 C1061.9,323.0 1063.2,320.5 1064.3,318.4 C1065.4,316.3 1066.5,313.1 1067.0,312.0" fill="none" stroke="#FFFFFF" stroke-width="1.1" stroke-linejoin="round" stroke-dasharray="2.5 4" />
<path d="M1028.0,315.0 C1028.1,317.9 1028.2,328.9 1028.4,332.7 C1028.6,336.5 1028.7,335.8 1029.0,337.8 C1029.3,339.8 1029.8,341.6 1030.3,344.6 C1030.8,347.6 1030.8,353.2 1031.8,356.0 C1032.8,358.8 1034.6,360.2 1036.4,361.5 C1038.2,362.8 1040.6,363.4 1042.6,363.8 C1044.6,364.2 1046.3,364.5 1048.3,364.0 C1050.3,363.5 1052.6,362.4 1054.6,361.0 C1056.6,359.6 1058.5,357.5 1060.3,355.5 C1062.1,353.5 1064.1,350.6 1065.2,349.0 C1066.3,347.4 1066.7,346.5 1067.0,346.0" fill="none" stroke="#FFFFFF" stroke-width="1.1" stroke-linejoin="round" stroke-dasharray="2.5 4" />
<path d="M1028.0,300.0 C1028.2,302.5 1028.8,310.6 1029.5,315.0 C1030.2,319.4 1031.4,322.9 1032.4,326.4 C1033.5,329.9 1034.5,333.3 1035.8,336.0 C1037.1,338.7 1038.8,340.8 1040.3,342.4 C1041.8,344.0 1043.6,345.0 1044.9,345.8 C1046.2,346.6 1047.0,347.0 1048.3,347.0 C1049.6,347.0 1051.4,346.8 1052.9,345.8 C1054.4,344.8 1056.0,342.9 1057.5,341.2 C1059.0,339.5 1060.3,337.4 1062.0,335.5 C1063.7,333.6 1066.8,330.8 1067.7,329.8" fill="none" stroke="#00EB78" stroke-width="2.4" stroke-linejoin="round" />
<g shape-rendering="crispEdges">
<line x1="1023.5" y1="6" x2="1023.5" y2="593" stroke="#00EB78" stroke-width="1" stroke-dasharray="18 6"/>
<rect x="1026" y="22" width="2" height="362" fill="#E6FFFF" />
<line x1="1047.5" y1="24" x2="1047.5" y2="593" stroke="#0000FF" stroke-width="1" stroke-dasharray="3 3"/>
<line x1="1167.5" y1="6" x2="1167.5" y2="593" stroke="#00F0F0" stroke-width="1" stroke-dasharray="3 3"/>
</g>
<g shape-rendering="crispEdges">
<rect x="0" y="384" width="1311" height="1" fill="#656565" />
<rect x="0" y="489" width="1311" height="1" fill="#656565" />
</g>
<path d="M3.0,404.5 L76.0,404.5 L82.0,402.5 L244.0,402.5 L250.0,405.5 L262.0,412.5 L268.0,413.5 L328.0,413.5 L342.0,403.5 L352.0,396.5 L366.0,393.5 L510.0,393.5 L518.0,400.5 L526.0,412.5 L530.0,417.5 L542.0,419.5 L570.0,420.5 L580.0,426.5 L588.0,427.5 L640.0,427.5 L648.0,416.5 L656.0,408.5 L664.0,405.5 L670.0,404.5 L784.0,404.5 L796.0,403.5 L963.0,403.5 L974.0,414.5 L982.0,418.5 L990.0,415.5 L1067.0,415.5" fill="none" stroke="#B4B4B4" stroke-width="1" stroke-linejoin="round" stroke-linecap="butt" stroke-dasharray="3 3" shape-rendering="crispEdges"/>
<path d="M3.0,449.5 L330.0,448.5 L342.0,437.5 L352.0,430.5 L356.0,429.5 L398.0,429.5 L406.0,424.5 L418.0,424.5 L442.0,430.5 L462.0,441.5 L474.0,447.5 L480.0,448.5 L638.0,448.5 L648.0,445.5 L652.0,445.5 L746.0,445.5 L754.0,439.5 L762.0,434.5 L778.0,433.5 L834.0,433.5 L840.0,438.5 L846.0,443.5 L850.0,444.5 L934.0,444.5 L946.0,447.5 L956.0,448.5 L1027.0,448.5 L1035.6,450.5 L1049.0,474.5 L1054.4,477.5 L1067.0,477.5" fill="none" stroke="#B4B4B4" stroke-width="1" stroke-linejoin="round" stroke-linecap="butt" stroke-dasharray="3 3" shape-rendering="crispEdges"/>
<path d="M3.0,427.5 L140.0,427.5 L160.0,426.5 L162.0,425.5 L200.0,425.5 L244.0,425.5 L258.0,428.5 L262.0,431.5 L328.0,431.5 L342.0,423.5 L354.0,412.5 L398.0,410.5 L406.0,408.5 L438.0,409.5 L454.0,414.5 L472.0,418.5 L482.0,420.5 L510.0,420.5 L520.0,425.5 L524.0,430.5 L532.0,434.5 L570.0,434.5 L578.0,437.5 L636.0,437.5 L644.0,433.5 L652.0,428.5 L660.0,425.5 L746.0,425.5 L754.0,422.5 L764.0,419.5 L778.0,418.5 L836.0,418.5 L844.0,422.5 L846.0,423.5 L942.0,423.5 L956.0,426.5 L966.0,427.5 L974.0,432.5 L986.0,433.5 L1036.0,432.5 L1042.5,437.5 L1048.5,443.5 L1052.7,446.5 L1067.0,446.5" fill="none" stroke="#F5CD00" stroke-width="1" stroke-linejoin="round" stroke-linecap="butt" stroke-dasharray="3 3" shape-rendering="crispEdges"/>
<path d="M3.0,448.5 L12.0,448.5" fill="none" stroke="#000000" stroke-width="2.2" stroke-linejoin="round" stroke-linecap="butt" />
<path d="M12.0,448.5 L24.0,447.5 L36.0,446.0 L50.0,441.5 L60.0,434.0 L70.0,423.0 L80.0,413.0 L88.0,408.6 L97.0,406.6" fill="none" stroke="#1E90FF" stroke-width="2.2" stroke-linejoin="round" stroke-linecap="butt" />
<path d="M97.0,406.6 L104.0,407.0 L114.0,409.0 L124.0,414.0 L132.0,419.0 L140.0,422.6 L150.0,431.0 L160.0,438.7 L170.0,443.7 L180.0,445.5" fill="none" stroke="#000000" stroke-width="2.2" stroke-linejoin="round" stroke-linecap="butt" />
<path d="M180.0,445.5 L188.0,445.0 L196.0,441.0 L204.0,432.0 L210.0,426.0 L217.0,423.6 L222.0,422.6" fill="none" stroke="#1E90FF" stroke-width="2.2" stroke-linejoin="round" stroke-linecap="butt" />
<path d="M222.0,422.6 L228.0,423.5 L234.0,426.0 L243.0,427.5" fill="none" stroke="#000000" stroke-width="2.2" stroke-linejoin="round" stroke-linecap="butt" />
<path d="M243.0,427.5 L254.0,427.7 L262.0,424.0 L272.0,419.0 L282.0,416.0 L290.0,416.0" fill="none" stroke="#1E90FF" stroke-width="2.2" stroke-linejoin="round" stroke-linecap="butt" />
<path d="M290.0,416.0 L302.0,418.0 L314.0,420.0 L324.0,420.0" fill="none" stroke="#000000" stroke-width="2.2" stroke-linejoin="round" stroke-linecap="butt" />
<path d="M324.0,420.0 L332.0,418.0 L342.0,409.0 L350.0,401.0 L360.0,397.4" fill="none" stroke="#1E90FF" stroke-width="2.2" stroke-linejoin="round" stroke-linecap="butt" />
<path d="M360.0,397.4 L370.0,398.0 L378.0,407.0 L388.0,416.0 L396.0,420.0 L404.0,420.0" fill="none" stroke="#000000" stroke-width="2.2" stroke-linejoin="round" stroke-linecap="butt" />
<path d="M404.0,420.0 L412.0,420.0" fill="none" stroke="#1E90FF" stroke-width="2.2" stroke-linejoin="round" stroke-linecap="butt" />
<path d="M412.0,420.0 L422.0,420.4 L434.0,423.0 L446.0,427.0 L458.0,435.0 L470.0,441.0 L480.0,444.7 L490.0,445.7" fill="none" stroke="#000000" stroke-width="2.2" stroke-linejoin="round" stroke-linecap="butt" />
<path d="M490.0,445.7 L500.0,444.0 L510.0,439.0 L520.0,434.0 L528.0,431.0 L532.0,430.0" fill="none" stroke="#1E90FF" stroke-width="2.2" stroke-linejoin="round" stroke-linecap="butt" />
<path d="M532.0,430.0 L542.0,431.5 L554.0,436.7 L564.0,440.7 L576.0,443.0 L588.0,444.7 L596.0,444.7" fill="none" stroke="#000000" stroke-width="2.2" stroke-linejoin="round" stroke-linecap="butt" />
<path d="M596.0,444.7 L604.0,444.0 L614.0,439.5 L624.0,435.0 L634.0,429.0 L644.0,421.0 L654.0,413.0 L664.0,408.0 L673.0,406.6" fill="none" stroke="#1E90FF" stroke-width="2.2" stroke-linejoin="round" stroke-linecap="butt" />
<path d="M673.0,406.6 L682.0,408.6 L690.0,413.0 L698.0,420.0 L706.0,425.0 L714.0,428.7 L724.0,429.5" fill="none" stroke="#000000" stroke-width="2.2" stroke-linejoin="round" stroke-linecap="butt" />
<path d="M724.0,429.5 L734.0,427.0 L744.0,421.0 L754.0,416.0 L764.0,413.6 L774.0,412.6 L784.0,411.0 L798.0,407.4 L811.0,404.4" fill="none" stroke="#1E90FF" stroke-width="2.2" stroke-linejoin="round" stroke-linecap="butt" />
<path d="M811.0,404.4 L819.0,404.6 L827.0,413.0 L834.0,426.0 L842.0,436.7 L852.0,439.5" fill="none" stroke="#000000" stroke-width="2.2" stroke-linejoin="round" stroke-linecap="butt" />
<path d="M852.0,439.5 L862.0,439.5 L872.0,434.0 L882.0,427.0 L892.0,422.6 L900.0,421.5" fill="none" stroke="#1E90FF" stroke-width="2.2" stroke-linejoin="round" stroke-linecap="butt" />
<path d="M900.0,421.5 L910.0,422.6 L920.0,426.0 L930.0,432.7 L940.0,437.5 L950.0,443.0 L964.0,445.0" fill="none" stroke="#000000" stroke-width="2.2" stroke-linejoin="round" stroke-linecap="butt" />
<path d="M964.0,445.0 L972.0,444.7 L982.0,438.0 L992.0,428.0 L1002.0,420.6 L1011.0,418.6" fill="none" stroke="#1E90FF" stroke-width="2.2" stroke-linejoin="round" stroke-linecap="butt" />
<path d="M1011.0,418.6 L1019.0,419.0 L1024.0,424.0 L1029.0,433.0 L1035.6,448.0 L1042.5,460.0 L1049.0,468.8 L1056.0,472.7 L1060.4,472.7" fill="none" stroke="#000000" stroke-width="2.2" stroke-linejoin="round" stroke-linecap="butt" />
<path d="M1060.4,472.7 L1067.3,469.6" fill="none" stroke="#1E90FF" stroke-width="2.2" stroke-linejoin="round" stroke-linecap="butt" />
<path d="M3.0,449.5 L12.0,448.0 L20.0,446.0 L30.0,444.0 L40.0,440.7 L48.0,436.0 L54.0,430.0 L60.0,423.0 L66.0,415.0 L72.0,408.0 L77.0,404.0 L81.0,402.6" fill="none" stroke="#8CF08C" stroke-width="2.2" stroke-linejoin="round" stroke-linecap="butt" />
<path d="M81.0,402.6 L88.0,402.6 L94.0,404.0 L100.0,408.0 L110.0,414.6 L120.0,421.0 L130.0,427.5 L140.0,433.0 L150.0,440.7 L160.0,448.0 L166.0,450.5 L171.0,450.7" fill="none" stroke="#FF6347" stroke-width="2.2" stroke-linejoin="round" stroke-linecap="butt" />
<path d="M171.0,450.7 L180.0,448.0 L186.0,442.0 L192.0,434.0 L198.0,425.0 L203.0,418.0 L210.0,416.6" fill="none" stroke="#8CF08C" stroke-width="2.2" stroke-linejoin="round" stroke-linecap="butt" />
<path d="M210.0,416.6 L216.0,420.0 L222.0,426.0 L228.0,430.7 L233.0,432.0" fill="none" stroke="#FF6347" stroke-width="2.2" stroke-linejoin="round" stroke-linecap="butt" />
<path d="M233.0,432.0 L240.0,430.7 L248.0,425.0 L256.0,418.0 L264.0,414.0 L268.0,413.0" fill="none" stroke="#8CF08C" stroke-width="2.2" stroke-linejoin="round" stroke-linecap="butt" />
<path d="M268.0,413.0 L280.0,414.0 L292.0,418.6 L304.0,421.6 L315.0,422.0" fill="none" stroke="#FF6347" stroke-width="2.2" stroke-linejoin="round" stroke-linecap="butt" />
<path d="M315.0,422.0 L324.0,419.4 L332.0,409.0 L340.0,400.0 L348.0,393.0 L355.0,392.0" fill="none" stroke="#8CF08C" stroke-width="2.2" stroke-linejoin="round" stroke-linecap="butt" />
<path d="M355.0,392.0 L362.0,396.0 L370.0,405.0 L378.0,416.0 L384.0,422.6 L388.0,425.0" fill="none" stroke="#FF6347" stroke-width="2.2" stroke-linejoin="round" stroke-linecap="butt" />
<path d="M388.0,425.0 L398.0,423.0 L406.0,419.0 L411.0,418.6" fill="none" stroke="#8CF08C" stroke-width="2.2" stroke-linejoin="round" stroke-linecap="butt" />
<path d="M411.0,418.6 L420.0,422.0 L430.0,428.0 L442.0,433.0 L454.0,439.0 L464.0,444.7 L474.0,448.0" fill="none" stroke="#FF6347" stroke-width="2.2" stroke-linejoin="round" stroke-linecap="butt" />
<path d="M474.0,448.0 L486.0,447.5 L492.0,443.0 L500.0,435.0 L510.0,428.7 L518.0,426.7" fill="none" stroke="#8CF08C" stroke-width="2.2" stroke-linejoin="round" stroke-linecap="butt" />
<path d="M518.0,426.7 L524.0,428.0 L532.0,429.5 L540.0,435.0 L548.0,441.0 L555.0,444.0" fill="none" stroke="#FF6347" stroke-width="2.2" stroke-linejoin="round" stroke-linecap="butt" />
<path d="M555.0,444.0 L571.0,444.0" fill="none" stroke="#8CF08C" stroke-width="2.2" stroke-linejoin="round" stroke-linecap="butt" />
<path d="M571.0,444.0 L580.0,445.7 L587.0,447.0" fill="none" stroke="#FF6347" stroke-width="2.2" stroke-linejoin="round" stroke-linecap="butt" />
<path d="M587.0,447.0 L596.0,445.0 L604.0,438.0 L612.0,433.0 L624.0,428.0 L634.0,421.0 L644.0,412.0 L652.0,405.0 L660.0,403.0" fill="none" stroke="#8CF08C" stroke-width="2.2" stroke-linejoin="round" stroke-linecap="butt" />
<path d="M660.0,403.0 L668.0,404.6 L676.0,410.0 L684.0,417.0 L692.0,425.0 L700.0,430.7 L708.0,433.0 L716.0,433.7" fill="none" stroke="#FF6347" stroke-width="2.2" stroke-linejoin="round" stroke-linecap="butt" />
<path d="M716.0,433.7 L724.0,430.7 L732.0,421.0 L740.0,414.6 L748.0,411.0 L756.0,411.0" fill="none" stroke="#8CF08C" stroke-width="2.2" stroke-linejoin="round" stroke-linecap="butt" />
<path d="M756.0,411.0 L763.0,411.0" fill="none" stroke="#FF6347" stroke-width="2.2" stroke-linejoin="round" stroke-linecap="butt" />
<path d="M763.0,411.0 L774.0,410.0 L784.0,407.4 L794.0,403.0 L803.0,401.6" fill="none" stroke="#8CF08C" stroke-width="2.2" stroke-linejoin="round" stroke-linecap="butt" />
<path d="M803.0,401.6 L811.0,403.0 L818.0,411.0 L826.0,425.0 L834.0,439.0 L840.0,445.0 L844.0,448.0" fill="none" stroke="#FF6347" stroke-width="2.2" stroke-linejoin="round" stroke-linecap="butt" />
<path d="M844.0,448.0 L852.0,443.5 L862.0,434.0 L872.0,424.0 L882.0,418.6 L890.0,417.6" fill="none" stroke="#8CF08C" stroke-width="2.2" stroke-linejoin="round" stroke-linecap="butt" />
<path d="M890.0,417.6 L898.0,420.0 L908.0,428.0 L918.0,435.0 L928.0,438.7 L938.0,444.0 L948.0,448.7 L956.0,448.7" fill="none" stroke="#FF6347" stroke-width="2.2" stroke-linejoin="round" stroke-linecap="butt" />
<path d="M956.0,448.7 L964.0,445.0 L972.0,436.7 L982.0,425.0 L992.0,416.6 L1002.0,414.0" fill="none" stroke="#8CF08C" stroke-width="2.2" stroke-linejoin="round" stroke-linecap="butt" />
<path d="M1002.0,414.0 L1011.0,416.0 L1018.0,424.0 L1025.0,436.0 L1032.0,451.7 L1039.0,467.0 L1044.0,477.0 L1051.0,483.0" fill="none" stroke="#FF6347" stroke-width="2.2" stroke-linejoin="round" stroke-linecap="butt" />
<path d="M1051.0,483.0 L1059.6,474.0 L1067.3,458.0" fill="none" stroke="#8CF08C" stroke-width="2.2" stroke-linejoin="round" stroke-linecap="butt" />
<g shape-rendering="crispEdges">
<rect x="3" y="528" width="2" height="11" fill="#1A1A1A" />
<rect x="6" y="528" width="3" height="12" fill="#1A1A1A" />
<rect x="10" y="528" width="3" height="12" fill="#1A1A1A" />
<rect x="14" y="528" width="3" height="13" fill="#1A1A1A" />
<rect x="18" y="528" width="3" height="15" fill="#1A1A1A" />
<rect x="22" y="528" width="3" height="17" fill="#1A1A1A" />
<rect x="26" y="528" width="3" height="17" fill="#1A1A1A" />
<rect x="31" y="528" width="1" height="17" fill="#0C9DEB" />
<rect x="35" y="528" width="1" height="17" fill="#0C9DEB" />
<rect x="39" y="528" width="1" height="16" fill="#0C9DEB" />
<rect x="43" y="528" width="1" height="16" fill="#0C9DEB" />
<rect x="47" y="528" width="1" height="15" fill="#0C9DEB" />
<rect x="51" y="528" width="1" height="15" fill="#0C9DEB" />
<rect x="55" y="528" width="1" height="13" fill="#0C9DEB" />
<rect x="59" y="528" width="1" height="12" fill="#0C9DEB" />
<rect x="63" y="528" width="1" height="10" fill="#0C9DEB" />
<rect x="67" y="528" width="1" height="9" fill="#0C9DEB" />
<rect x="71" y="528" width="1" height="7" fill="#0C9DEB" />
<rect x="75" y="528" width="1" height="5" fill="#0C9DEB" />
<rect x="78" y="528" width="3" height="6" fill="#1A1A1A" />
<rect x="82" y="528" width="3" height="6" fill="#1A1A1A" />
<rect x="86" y="528" width="3" height="6" fill="#1A1A1A" />
<rect x="91" y="528" width="1" height="5" fill="#0C9DEB" />
<rect x="95" y="528" width="1" height="4" fill="#0C9DEB" />
<rect x="99" y="528" width="1" height="4" fill="#0C9DEB" />
<rect x="103" y="528" width="1" height="3" fill="#0C9DEB" />
<rect x="107" y="528" width="1" height="2" fill="#0C9DEB" />
<rect x="110" y="528" width="3" height="3" fill="#1A1A1A" />
<rect x="114" y="528" width="3" height="3" fill="#1A1A1A" />
<rect x="118" y="528" width="3" height="4" fill="#1A1A1A" />
<rect x="122" y="528" width="3" height="4" fill="#1A1A1A" />
<rect x="127" y="528" width="1" height="3" fill="#0C9DEB" />
<rect x="131" y="528" width="1" height="2" fill="#0C9DEB" />
<rect x="134" y="528" width="3" height="2" fill="#1A1A1A" />
<rect x="138" y="528" width="3" height="4" fill="#1A1A1A" />
<rect x="142" y="528" width="3" height="6" fill="#1A1A1A" />
<rect x="146" y="528" width="3" height="8" fill="#1A1A1A" />
<rect x="150" y="528" width="3" height="10" fill="#1A1A1A" />
<rect x="154" y="528" width="3" height="10" fill="#1A1A1A" />
<rect x="158" y="528" width="3" height="10" fill="#1A1A1A" />
<rect x="163" y="528" width="1" height="10" fill="#0C9DEB" />
<rect x="167" y="528" width="1" height="9" fill="#0C9DEB" />
<rect x="171" y="528" width="1" height="8" fill="#0C9DEB" />
<rect x="175" y="528" width="1" height="7" fill="#0C9DEB" />
<rect x="179" y="528" width="1" height="6" fill="#0C9DEB" />
<rect x="183" y="528" width="1" height="5" fill="#0C9DEB" />
<rect x="187" y="528" width="1" height="5" fill="#0C9DEB" />
<rect x="191" y="528" width="1" height="4" fill="#0C9DEB" />
<rect x="195" y="528" width="1" height="3" fill="#0C9DEB" />
<rect x="198" y="528" width="3" height="3" fill="#1A1A1A" />
<rect x="202" y="528" width="3" height="3" fill="#1A1A1A" />
<rect x="206" y="528" width="3" height="4" fill="#1A1A1A" />
<rect x="210" y="528" width="3" height="5" fill="#1A1A1A" />
<rect x="214" y="528" width="3" height="11" fill="#1A1A1A" />
<rect x="218" y="528" width="3" height="17" fill="#1A1A1A" />
<rect x="222" y="528" width="3" height="22" fill="#1A1A1A" />
<rect x="227" y="528" width="1" height="19" fill="#0C9DEB" />
<rect x="231" y="528" width="1" height="16" fill="#0C9DEB" />
<rect x="235" y="528" width="1" height="16" fill="#0C9DEB" />
<rect x="239" y="528" width="1" height="15" fill="#0C9DEB" />
<rect x="243" y="528" width="1" height="13" fill="#0C9DEB" />
<rect x="247" y="528" width="1" height="11" fill="#0C9DEB" />
<rect x="251" y="528" width="1" height="9" fill="#0C9DEB" />
<rect x="255" y="528" width="1" height="8" fill="#0C9DEB" />
<rect x="259" y="528" width="1" height="7" fill="#0C9DEB" />
<rect x="262" y="528" width="3" height="8" fill="#1A1A1A" />
<rect x="267" y="528" width="1" height="7" fill="#0C9DEB" />
<rect x="271" y="528" width="1" height="6" fill="#0C9DEB" />
<rect x="275" y="528" width="1" height="5" fill="#0C9DEB" />
<rect x="279" y="528" width="1" height="1" fill="#0C9DEB" />
<rect x="282" y="526" width="3" height="2" fill="#0C9DEB" />
<rect x="286" y="525" width="3" height="3" fill="#0C9DEB" />
<rect x="291" y="526" width="1" height="2" fill="#1A1A1A" />
<rect x="295" y="526" width="1" height="2" fill="#1A1A1A" />
<rect x="299" y="526" width="1" height="2" fill="#1A1A1A" />
<rect x="303" y="526" width="1" height="2" fill="#1A1A1A" />
<rect x="307" y="527" width="1" height="1" fill="#1A1A1A" />
<rect x="310" y="527" width="3" height="1" fill="#0C9DEB" />
<rect x="314" y="526" width="3" height="2" fill="#0C9DEB" />
<rect x="318" y="524" width="3" height="4" fill="#0C9DEB" />
<rect x="322" y="522" width="3" height="6" fill="#0C9DEB" />
<rect x="326" y="520" width="3" height="8" fill="#0C9DEB" />
<rect x="330" y="518" width="3" height="10" fill="#0C9DEB" />
<rect x="334" y="516" width="3" height="12" fill="#0C9DEB" />
<rect x="338" y="515" width="3" height="13" fill="#0C9DEB" />
<rect x="343" y="515" width="1" height="13" fill="#1A1A1A" />
<rect x="347" y="515" width="1" height="13" fill="#1A1A1A" />
<rect x="351" y="517" width="1" height="11" fill="#1A1A1A" />
<rect x="355" y="518" width="1" height="10" fill="#1A1A1A" />
<rect x="359" y="519" width="1" height="9" fill="#1A1A1A" />
<rect x="363" y="519" width="1" height="9" fill="#1A1A1A" />
<rect x="367" y="521" width="1" height="7" fill="#1A1A1A" />
<rect x="371" y="522" width="1" height="6" fill="#1A1A1A" />
<rect x="375" y="522" width="1" height="6" fill="#1A1A1A" />
<rect x="378" y="522" width="3" height="6" fill="#0C9DEB" />
<rect x="382" y="520" width="3" height="8" fill="#0C9DEB" />
<rect x="386" y="519" width="3" height="9" fill="#0C9DEB" />
<rect x="390" y="516" width="3" height="12" fill="#0C9DEB" />
<rect x="394" y="514" width="3" height="14" fill="#0C9DEB" />
<rect x="398" y="512" width="3" height="16" fill="#0C9DEB" />
<rect x="402" y="511" width="3" height="17" fill="#0C9DEB" />
<rect x="407" y="512" width="1" height="16" fill="#1A1A1A" />
<rect x="411" y="513" width="1" height="15" fill="#1A1A1A" />
<rect x="415" y="513" width="1" height="15" fill="#1A1A1A" />
<rect x="419" y="513" width="1" height="15" fill="#1A1A1A" />
<rect x="422" y="511" width="3" height="17" fill="#0C9DEB" />
<rect x="426" y="509" width="3" height="19" fill="#0C9DEB" />
<rect x="430" y="505" width="3" height="23" fill="#0C9DEB" />
<rect x="434" y="505" width="3" height="23" fill="#0C9DEB" />
<rect x="438" y="505" width="3" height="23" fill="#0C9DEB" />
<rect x="443" y="509" width="1" height="19" fill="#1A1A1A" />
<rect x="447" y="512" width="1" height="16" fill="#1A1A1A" />
<rect x="451" y="514" width="1" height="14" fill="#1A1A1A" />
<rect x="455" y="517" width="1" height="11" fill="#1A1A1A" />
<rect x="459" y="520" width="1" height="8" fill="#1A1A1A" />
<rect x="463" y="522" width="1" height="6" fill="#1A1A1A" />
<rect x="467" y="524" width="1" height="4" fill="#1A1A1A" />
<rect x="471" y="525" width="1" height="3" fill="#1A1A1A" />
<rect x="475" y="527" width="1" height="1" fill="#1A1A1A" />
<rect x="478" y="528" width="3" height="1" fill="#1A1A1A" />
<rect x="486" y="527" width="3" height="1" fill="#0C9DEB" />
<rect x="490" y="527" width="3" height="1" fill="#0C9DEB" />
<rect x="494" y="527" width="3" height="1" fill="#0C9DEB" />
<rect x="498" y="527" width="3" height="1" fill="#0C9DEB" />
<rect x="503" y="527" width="1" height="1" fill="#1A1A1A" />
<rect x="510" y="528" width="3" height="1" fill="#1A1A1A" />
<rect x="514" y="528" width="3" height="1" fill="#1A1A1A" />
<rect x="518" y="528" width="3" height="2" fill="#1A1A1A" />
<rect x="522" y="528" width="3" height="4" fill="#1A1A1A" />
<rect x="526" y="528" width="3" height="7" fill="#1A1A1A" />
<rect x="530" y="528" width="3" height="10" fill="#1A1A1A" />
<rect x="534" y="528" width="3" height="12" fill="#1A1A1A" />
<rect x="538" y="528" width="3" height="14" fill="#1A1A1A" />
<rect x="542" y="528" width="3" height="14" fill="#1A1A1A" />
<rect x="546" y="528" width="3" height="14" fill="#1A1A1A" />
<rect x="551" y="528" width="1" height="12" fill="#0C9DEB" />
<rect x="555" y="528" width="1" height="11" fill="#0C9DEB" />
<rect x="559" y="528" width="1" height="10" fill="#0C9DEB" />
<rect x="563" y="528" width="1" height="9" fill="#0C9DEB" />
<rect x="566" y="528" width="3" height="10" fill="#1A1A1A" />
<rect x="570" y="528" width="3" height="11" fill="#1A1A1A" />
<rect x="574" y="528" width="3" height="11" fill="#1A1A1A" />
<rect x="579" y="528" width="1" height="11" fill="#0C9DEB" />
<rect x="583" y="528" width="1" height="11" fill="#0C9DEB" />
<rect x="587" y="528" width="1" height="11" fill="#0C9DEB" />
<rect x="591" y="528" width="1" height="10" fill="#0C9DEB" />
<rect x="595" y="528" width="1" height="10" fill="#0C9DEB" />
<rect x="599" y="528" width="1" height="9" fill="#0C9DEB" />
<rect x="603" y="528" width="1" height="9" fill="#0C9DEB" />
<rect x="607" y="528" width="1" height="9" fill="#0C9DEB" />
<rect x="611" y="528" width="1" height="9" fill="#0C9DEB" />
<rect x="614" y="528" width="3" height="10" fill="#1A1A1A" />
<rect x="618" y="528" width="3" height="11" fill="#1A1A1A" />
<rect x="622" y="528" width="3" height="11" fill="#1A1A1A" />
<rect x="627" y="528" width="1" height="11" fill="#0C9DEB" />
<rect x="631" y="528" width="1" height="9" fill="#0C9DEB" />
<rect x="635" y="528" width="1" height="8" fill="#0C9DEB" />
<rect x="639" y="528" width="1" height="7" fill="#0C9DEB" />
<rect x="643" y="528" width="1" height="7" fill="#0C9DEB" />
<rect x="647" y="528" width="1" height="7" fill="#0C9DEB" />
<rect x="651" y="528" width="1" height="6" fill="#0C9DEB" />
<rect x="655" y="528" width="1" height="5" fill="#0C9DEB" />
<rect x="658" y="528" width="3" height="7" fill="#1A1A1A" />
<rect x="662" y="528" width="3" height="8" fill="#1A1A1A" />
<rect x="666" y="528" width="3" height="10" fill="#1A1A1A" />
<rect x="670" y="528" width="3" height="12" fill="#1A1A1A" />
<rect x="674" y="528" width="3" height="13" fill="#1A1A1A" />
<rect x="678" y="528" width="3" height="14" fill="#1A1A1A" />
<rect x="682" y="528" width="3" height="18" fill="#1A1A1A" />
<rect x="686" y="528" width="3" height="20" fill="#1A1A1A" />
<rect x="691" y="528" width="1" height="20" fill="#0C9DEB" />
<rect x="695" y="528" width="1" height="19" fill="#0C9DEB" />
<rect x="699" y="528" width="1" height="19" fill="#0C9DEB" />
<rect x="702" y="528" width="3" height="20" fill="#1A1A1A" />
<rect x="706" y="528" width="3" height="20" fill="#1A1A1A" />
<rect x="711" y="528" width="1" height="20" fill="#0C9DEB" />
<rect x="715" y="528" width="1" height="18" fill="#0C9DEB" />
<rect x="719" y="528" width="1" height="16" fill="#0C9DEB" />
<rect x="723" y="528" width="1" height="11" fill="#0C9DEB" />
<rect x="727" y="528" width="1" height="7" fill="#0C9DEB" />
<rect x="731" y="528" width="1" height="3" fill="#0C9DEB" />
<rect x="735" y="528" width="1" height="1" fill="#0C9DEB" />
<rect x="746" y="527" width="3" height="1" fill="#0C9DEB" />
<rect x="750" y="526" width="3" height="2" fill="#0C9DEB" />
<rect x="754" y="523" width="3" height="5" fill="#0C9DEB" />
<rect x="758" y="518" width="3" height="10" fill="#0C9DEB" />
<rect x="762" y="512" width="3" height="16" fill="#0C9DEB" />
<rect x="766" y="507" width="3" height="21" fill="#0C9DEB" />
<rect x="770" y="502" width="3" height="26" fill="#0C9DEB" />
<rect x="774" y="501" width="3" height="27" fill="#0C9DEB" />
<rect x="778" y="499" width="3" height="29" fill="#0C9DEB" />
<rect x="782" y="498" width="3" height="30" fill="#0C9DEB" />
<rect x="786" y="497" width="3" height="31" fill="#0C9DEB" />
<rect x="790" y="497" width="3" height="31" fill="#0C9DEB" />
<rect x="795" y="498" width="1" height="30" fill="#1A1A1A" />
<rect x="799" y="500" width="1" height="28" fill="#1A1A1A" />
<rect x="803" y="502" width="1" height="26" fill="#1A1A1A" />
<rect x="807" y="503" width="1" height="25" fill="#1A1A1A" />
<rect x="811" y="505" width="1" height="23" fill="#1A1A1A" />
<rect x="815" y="507" width="1" height="21" fill="#1A1A1A" />
<rect x="819" y="509" width="1" height="19" fill="#1A1A1A" />
<rect x="823" y="513" width="1" height="15" fill="#1A1A1A" />
<rect x="827" y="517" width="1" height="11" fill="#1A1A1A" />
<rect x="831" y="518" width="1" height="10" fill="#1A1A1A" />
<rect x="834" y="518" width="3" height="10" fill="#0C9DEB" />
<rect x="838" y="517" width="3" height="11" fill="#0C9DEB" />
<rect x="842" y="517" width="3" height="11" fill="#0C9DEB" />
<rect x="846" y="516" width="3" height="12" fill="#0C9DEB" />
<rect x="850" y="515" width="3" height="13" fill="#0C9DEB" />
<rect x="854" y="513" width="3" height="15" fill="#0C9DEB" />
<rect x="858" y="511" width="3" height="17" fill="#0C9DEB" />
<rect x="862" y="508" width="3" height="20" fill="#0C9DEB" />
<rect x="866" y="506" width="3" height="22" fill="#0C9DEB" />
<rect x="871" y="506" width="1" height="22" fill="#1A1A1A" />
<rect x="875" y="508" width="1" height="20" fill="#1A1A1A" />
<rect x="879" y="510" width="1" height="18" fill="#1A1A1A" />
<rect x="883" y="513" width="1" height="15" fill="#1A1A1A" />
<rect x="887" y="515" width="1" height="13" fill="#1A1A1A" />
<rect x="891" y="517" width="1" height="11" fill="#1A1A1A" />
<rect x="895" y="519" width="1" height="9" fill="#1A1A1A" />
<rect x="899" y="521" width="1" height="7" fill="#1A1A1A" />
<rect x="903" y="523" width="1" height="5" fill="#1A1A1A" />
<rect x="907" y="525" width="1" height="3" fill="#1A1A1A" />
<rect x="910" y="524" width="3" height="4" fill="#0C9DEB" />
<rect x="914" y="522" width="3" height="6" fill="#0C9DEB" />
<rect x="918" y="522" width="3" height="6" fill="#0C9DEB" />
<rect x="923" y="524" width="1" height="4" fill="#1A1A1A" />
<rect x="927" y="527" width="1" height="1" fill="#1A1A1A" />
<rect x="930" y="528" width="3" height="4" fill="#1A1A1A" />
<rect x="934" y="528" width="3" height="8" fill="#1A1A1A" />
<rect x="938" y="528" width="3" height="13" fill="#1A1A1A" />
<rect x="942" y="528" width="3" height="15" fill="#1A1A1A" />
<rect x="947" y="528" width="1" height="13" fill="#0C9DEB" />
<rect x="951" y="528" width="1" height="10" fill="#0C9DEB" />
<rect x="955" y="528" width="1" height="6" fill="#0C9DEB" />
<rect x="959" y="528" width="1" height="3" fill="#0C9DEB" />
<rect x="963" y="528" width="1" height="1" fill="#0C9DEB" />
<rect x="970" y="527" width="3" height="1" fill="#0C9DEB" />
<rect x="974" y="526" width="3" height="2" fill="#0C9DEB" />
<rect x="978" y="524" width="3" height="4" fill="#0C9DEB" />
<rect x="982" y="523" width="3" height="5" fill="#0C9DEB" />
<rect x="986" y="523" width="3" height="5" fill="#0C9DEB" />
<rect x="991" y="524" width="1" height="4" fill="#1A1A1A" />
<rect x="995" y="526" width="1" height="2" fill="#1A1A1A" />
<rect x="999" y="527" width="1" height="1" fill="#1A1A1A" />
<rect x="1010" y="528" width="3" height="1" fill="#1A1A1A" />
<rect x="1014" y="528" width="3" height="6" fill="#1A1A1A" />
<rect x="1018" y="528" width="3" height="15" fill="#1A1A1A" />
<rect x="1022" y="528" width="3" height="23" fill="#1A1A1A" />
<rect x="1026" y="528" width="3" height="29" fill="#1A1A1A" />
<rect x="1030" y="528" width="3" height="36" fill="#1A1A1A" />
<rect x="1034" y="528" width="3" height="42" fill="#1A1A1A" />
<rect x="1038" y="528" width="3" height="51" fill="#1A1A1A" />
<rect x="1042" y="528" width="3" height="60" fill="#1A1A1A" />
<rect x="1046" y="528" width="3" height="61" fill="#1A1A1A" />
<rect x="1051" y="528" width="1" height="58" fill="#0C9DEB" />
<rect x="1055" y="528" width="1" height="53" fill="#0C9DEB" />
<rect x="1059" y="528" width="1" height="47" fill="#0C9DEB" />
<rect x="1063" y="528" width="1" height="42" fill="#0C9DEB" />
<rect x="1067" y="528" width="1" height="37" fill="#0C9DEB" />
</g>
<path d="M3.0,539.0 L14.0,541.0 L24.0,545.5 L32.0,545.0 L44.0,544.0 L52.0,542.5 L64.0,538.0 L75.0,533.0 L86.0,534.5 L98.0,531.7 L108.0,530.0 L116.0,531.7 L126.0,531.7 L132.0,530.0 L138.0,531.0 L151.0,537.7 L162.0,537.7 L172.0,535.7 L182.0,533.7 L194.0,531.0 L204.0,531.5 L211.0,533.0 L218.0,544.0 L223.0,549.5 L230.0,544.5 L240.0,542.7 L252.0,536.0 L260.0,535.0 L262.0,535.7 L274.0,533.7 L284.0,525.0 L290.0,525.6 L300.0,525.6 L308.0,527.6 L318.0,525.0 L330.0,518.0 L340.0,514.4 L348.0,515.6 L356.0,518.6 L362.0,519.0 L368.0,521.4 L376.0,522.4 L386.0,519.6 L394.0,514.4 L402.0,511.0 L410.0,512.4 L418.0,513.6 L424.0,511.0 L431.0,505.4 L439.0,505.4 L446.0,511.0 L454.0,516.0 L462.0,522.0 L470.0,525.0 L479.0,529.0 L490.0,526.6 L500.0,526.6 L510.0,528.6 L520.0,530.0 L524.0,532.5 L532.0,539.0 L538.0,541.5 L548.0,541.5 L556.0,538.7 L564.0,537.0 L572.0,539.5 L586.0,539.0 L598.0,537.5 L612.0,537.0 L622.0,539.5 L627.0,539.0 L634.0,535.7 L648.0,535.0 L655.0,533.0 L662.0,535.7 L672.0,540.5 L679.0,542.5 L684.0,547.5 L688.0,548.7 L694.0,546.7 L700.0,546.7 L706.0,548.5 L712.0,548.0 L719.0,544.0 L726.0,535.7 L732.0,530.0 L738.0,528.0 L746.0,527.6 L752.0,526.0 L757.0,521.0 L764.0,510.0 L771.0,502.0 L778.0,499.6 L786.0,497.0 L792.0,497.0 L800.0,501.0 L812.0,505.0 L820.0,510.0 L828.0,517.6 L833.0,518.0 L844.0,517.0 L854.0,513.6 L860.0,511.0 L865.0,505.6 L870.0,505.6 L876.0,508.4 L884.0,514.0 L894.0,518.6 L902.0,523.0 L908.0,525.6 L914.0,522.4 L921.0,522.4 L928.0,528.0 L934.0,535.0 L940.0,541.7 L943.0,543.0 L950.0,539.0 L958.0,531.0 L966.0,528.5 L974.0,526.0 L982.0,523.4 L988.0,523.4 L994.0,525.6 L1000.0,527.6 L1010.0,527.6 L1013.0,530.4 L1023.0,550.6 L1036.4,572.8 L1043.4,588.4 L1047.5,589.0 L1052.5,584.0 L1060.6,572.8 L1067.7,563.7" fill="none" stroke="#AEEEEE" stroke-width="1.2" stroke-linejoin="round" stroke-linecap="butt" />
<g shape-rendering="crispEdges">
<line x1="1023.5" y1="385" x2="1023.5" y2="593" stroke="#00EB78" stroke-width="1" stroke-dasharray="18 6" stroke-dashoffset="19"/>
<line x1="1047.5" y1="385" x2="1047.5" y2="528" stroke="#0000FF" stroke-width="1" stroke-dasharray="3 3" stroke-dashoffset="1"/>
<line x1="1059.5" y1="386" x2="1059.5" y2="488" stroke="#A0A0A0" stroke-width="1" stroke-dasharray="18 6"/>
<line x1="1063.5" y1="491" x2="1063.5" y2="593" stroke="#A0A0A0" stroke-width="1" stroke-dasharray="18 6"/>
<rect x="2" y="5" width="1309" height="1" fill="#FFFFFF" />
<rect x="2" y="383" width="1309" height="1" fill="#FFFFFF" />
<rect x="2" y="5" width="1" height="379" fill="#FFFFFF" />
<rect x="2" y="385" width="1309" height="1" fill="#FFFFFF" />
<rect x="2" y="488" width="1309" height="1" fill="#FFFFFF" />
<rect x="2" y="385" width="1" height="104" fill="#FFFFFF" />
<rect x="2" y="490" width="1309" height="1" fill="#FFFFFF" />
<rect x="2" y="593" width="1309" height="1" fill="#FFFFFF" />
<rect x="2" y="490" width="1" height="104" fill="#FFFFFF" />
<rect x="1310" y="5" width="1" height="589" fill="#FFFFFF" />
<rect x="1311" y="40" width="2" height="1" fill="#FFFFFF" />
<rect x="1311" y="74" width="2" height="1" fill="#FFFFFF" />
<rect x="1311" y="108" width="2" height="1" fill="#FFFFFF" />
<rect x="1311" y="142" width="2" height="1" fill="#FFFFFF" />
<rect x="1311" y="176" width="2" height="1" fill="#FFFFFF" />
<rect x="1311" y="210" width="2" height="1" fill="#FFFFFF" />
<rect x="1311" y="244" width="2" height="1" fill="#FFFFFF" />
<rect x="1311" y="278" width="2" height="1" fill="#FFFFFF" />
<rect x="1311" y="312" width="2" height="1" fill="#FFFFFF" />
<rect x="1311" y="346" width="2" height="1" fill="#FFFFFF" />
<rect x="1311" y="380" width="2" height="1" fill="#FFFFFF" />
<rect x="1311" y="386" width="1" height="1" fill="#FFFFFF" />
<rect x="1311" y="487" width="1" height="1" fill="#FFFFFF" />
<rect x="1311" y="492" width="1" height="1" fill="#FFFFFF" />
<rect x="1311" y="528" width="1" height="1" fill="#FFFFFF" />
<rect x="1311" y="592" width="1" height="1" fill="#FFFFFF" />
<rect x="3" y="594" width="1" height="3" fill="#FFFFFF" />
<rect x="67" y="594" width="1" height="3" fill="#FFFFFF" />
<rect x="131" y="594" width="1" height="3" fill="#FFFFFF" />
<rect x="195" y="594" width="1" height="3" fill="#FFFFFF" />
<rect x="259" y="594" width="1" height="3" fill="#FFFFFF" />
<rect x="323" y="594" width="1" height="3" fill="#FFFFFF" />
<rect x="387" y="594" width="1" height="3" fill="#FFFFFF" />
<rect x="451" y="594" width="1" height="3" fill="#FFFFFF" />
<rect x="515" y="594" width="1" height="3" fill="#FFFFFF" />
<rect x="579" y="594" width="1" height="3" fill="#FFFFFF" />
<rect x="643" y="594" width="1" height="3" fill="#FFFFFF" />
<rect x="707" y="594" width="1" height="3" fill="#FFFFFF" />
<rect x="771" y="594" width="1" height="3" fill="#FFFFFF" />
<rect x="835" y="594" width="1" height="3" fill="#FFFFFF" />
<rect x="899" y="594" width="1" height="3" fill="#FFFFFF" />
<rect x="963" y="594" width="1" height="3" fill="#FFFFFF" />
<rect x="1027" y="594" width="1" height="3" fill="#FFFFFF" />
</g>
<text x="1316" y="44" fill="#fff" font-size="10" text-anchor="start" font-weight="normal" text-rendering="geometricPrecision" textLength="33" lengthAdjust="spacingAndGlyphs">1.32755</text>
<text x="1316" y="78" fill="#fff" font-size="10" text-anchor="start" font-weight="normal" text-rendering="geometricPrecision" textLength="33" lengthAdjust="spacingAndGlyphs">1.32680</text>
<text x="1316" y="112" fill="#fff" font-size="10" text-anchor="start" font-weight="normal" text-rendering="geometricPrecision" textLength="33" lengthAdjust="spacingAndGlyphs">1.32605</text>
<text x="1316" y="146" fill="#fff" font-size="10" text-anchor="start" font-weight="normal" text-rendering="geometricPrecision" textLength="33" lengthAdjust="spacingAndGlyphs">1.32530</text>
<text x="1316" y="180" fill="#fff" font-size="10" text-anchor="start" font-weight="normal" text-rendering="geometricPrecision" textLength="33" lengthAdjust="spacingAndGlyphs">1.32455</text>
<text x="1316" y="214" fill="#fff" font-size="10" text-anchor="start" font-weight="normal" text-rendering="geometricPrecision" textLength="33" lengthAdjust="spacingAndGlyphs">1.32380</text>
<text x="1316" y="248" fill="#fff" font-size="10" text-anchor="start" font-weight="normal" text-rendering="geometricPrecision" textLength="33" lengthAdjust="spacingAndGlyphs">1.32305</text>
<text x="1316" y="282" fill="#fff" font-size="10" text-anchor="start" font-weight="normal" text-rendering="geometricPrecision" textLength="33" lengthAdjust="spacingAndGlyphs">1.32230</text>
<text x="1316" y="316" fill="#fff" font-size="10" text-anchor="start" font-weight="normal" text-rendering="geometricPrecision" textLength="33" lengthAdjust="spacingAndGlyphs">1.32155</text>
<text x="1316" y="350" fill="#fff" font-size="10" text-anchor="start" font-weight="normal" text-rendering="geometricPrecision" textLength="33" lengthAdjust="spacingAndGlyphs">1.32080</text>
<text x="1316" y="384" fill="#fff" font-size="10" text-anchor="start" font-weight="normal" text-rendering="geometricPrecision" textLength="33" lengthAdjust="spacingAndGlyphs">1.32005</text>
<text x="1314" y="396" fill="#fff" font-size="10" text-anchor="start" font-weight="normal" text-rendering="geometricPrecision" textLength="38" lengthAdjust="spacingAndGlyphs">76.54324</text>
<text x="1314" y="485" fill="#fff" font-size="10" text-anchor="start" font-weight="normal" text-rendering="geometricPrecision" textLength="33" lengthAdjust="spacingAndGlyphs">6.31153</text>
<text x="1314" y="501" fill="#fff" font-size="10" text-anchor="start" font-weight="normal" text-rendering="geometricPrecision" textLength="33" lengthAdjust="spacingAndGlyphs">0.00078</text>
<text x="1314" y="532" fill="#fff" font-size="10" text-anchor="start" font-weight="normal" text-rendering="geometricPrecision" textLength="18.5" lengthAdjust="spacingAndGlyphs">0.00</text>
<text x="1314" y="590" fill="#fff" font-size="10" text-anchor="start" font-weight="normal" text-rendering="geometricPrecision" textLength="36" lengthAdjust="spacingAndGlyphs">-0.00137</text>
<g shape-rendering="crispEdges">
<rect x="1312" y="258" width="42" height="11" fill="#FFFFFF" />
</g>
<text x="1316" y="267" fill="#555" font-size="10" text-anchor="start" font-weight="normal" text-rendering="geometricPrecision" textLength="33" lengthAdjust="spacingAndGlyphs">1.32263</text>
<text x="2.3" y="606" fill="#fff" font-size="10" text-anchor="start" font-weight="normal" text-rendering="geometricPrecision" textLength="51" lengthAdjust="spacingAndGlyphs">14 Feb 2020</text>
<text x="66.3" y="606" fill="#fff" font-size="10" text-anchor="start" font-weight="normal" text-rendering="geometricPrecision" textLength="54" lengthAdjust="spacingAndGlyphs">14 Feb 18:30</text>
<text x="130.3" y="606" fill="#fff" font-size="10" text-anchor="start" font-weight="normal" text-rendering="geometricPrecision" textLength="54" lengthAdjust="spacingAndGlyphs">17 Feb 02:30</text>
<text x="194.3" y="606" fill="#fff" font-size="10" text-anchor="start" font-weight="normal" text-rendering="geometricPrecision" textLength="54" lengthAdjust="spacingAndGlyphs">17 Feb 10:30</text>
<text x="258.3" y="606" fill="#fff" font-size="10" text-anchor="start" font-weight="normal" text-rendering="geometricPrecision" textLength="54" lengthAdjust="spacingAndGlyphs">17 Feb 18:30</text>
<text x="322.3" y="606" fill="#fff" font-size="10" text-anchor="start" font-weight="normal" text-rendering="geometricPrecision" textLength="54" lengthAdjust="spacingAndGlyphs">18 Feb 02:30</text>
<text x="386.3" y="606" fill="#fff" font-size="10" text-anchor="start" font-weight="normal" text-rendering="geometricPrecision" textLength="54" lengthAdjust="spacingAndGlyphs">18 Feb 10:30</text>
<text x="450.3" y="606" fill="#fff" font-size="10" text-anchor="start" font-weight="normal" text-rendering="geometricPrecision" textLength="54" lengthAdjust="spacingAndGlyphs">18 Feb 18:30</text>
<text x="514.3" y="606" fill="#fff" font-size="10" text-anchor="start" font-weight="normal" text-rendering="geometricPrecision" textLength="54" lengthAdjust="spacingAndGlyphs">19 Feb 02:30</text>
<text x="578.3" y="606" fill="#fff" font-size="10" text-anchor="start" font-weight="normal" text-rendering="geometricPrecision" textLength="54" lengthAdjust="spacingAndGlyphs">19 Feb 10:30</text>
<text x="642.3" y="606" fill="#fff" font-size="10" text-anchor="start" font-weight="normal" text-rendering="geometricPrecision" textLength="54" lengthAdjust="spacingAndGlyphs">19 Feb 18:30</text>
<text x="706.3" y="606" fill="#fff" font-size="10" text-anchor="start" font-weight="normal" text-rendering="geometricPrecision" textLength="54" lengthAdjust="spacingAndGlyphs">20 Feb 02:30</text>
<text x="770.3" y="606" fill="#fff" font-size="10" text-anchor="start" font-weight="normal" text-rendering="geometricPrecision" textLength="54" lengthAdjust="spacingAndGlyphs">20 Feb 10:30</text>
<text x="834.3" y="606" fill="#fff" font-size="10" text-anchor="start" font-weight="normal" text-rendering="geometricPrecision" textLength="54" lengthAdjust="spacingAndGlyphs">20 Feb 18:30</text>
<text x="898.3" y="606" fill="#fff" font-size="10" text-anchor="start" font-weight="normal" text-rendering="geometricPrecision" textLength="54" lengthAdjust="spacingAndGlyphs">21 Feb 02:30</text>
<text x="962.3" y="606" fill="#fff" font-size="10" text-anchor="start" font-weight="normal" text-rendering="geometricPrecision" textLength="54" lengthAdjust="spacingAndGlyphs">21 Feb 10:30</text>
<text x="1026.3" y="606" fill="#fff" font-size="10" text-anchor="start" font-weight="normal" text-rendering="geometricPrecision" textLength="54" lengthAdjust="spacingAndGlyphs">21 Feb 18:30</text>
<g shape-rendering="crispEdges">
<rect x="983" y="597" width="80" height="11" fill="#00EC76" />
</g>
<text x="987" y="606" fill="#4d4d4d" font-size="10" text-anchor="start" font-weight="normal" text-rendering="geometricPrecision" textLength="71" lengthAdjust="spacingAndGlyphs">2020.02.21 18:00</text>
<g shape-rendering="crispEdges">
<rect x="238" y="6" width="32" height="16" fill="#000" />
<rect x="239" y="7" width="30" height="14" fill="#ECE9D8" />
</g>
<text x="243.9" y="18" fill="#0000FF" font-size="10.5" text-anchor="start" font-weight="normal" textLength="20.6" lengthAdjust="spacingAndGlyphs">DCP</text>
<g shape-rendering="crispEdges">
<rect x="269" y="6" width="27" height="16" fill="#000" />
<rect x="270" y="7" width="25" height="14" fill="#ECE9D8" />
</g>
<text x="273.0" y="18" fill="#808080" font-size="10.5" text-anchor="start" font-weight="normal" textLength="20.0" lengthAdjust="spacingAndGlyphs">MTF</text>
<g shape-rendering="crispEdges">
<rect x="295" y="6" width="55" height="16" fill="#000" />
<rect x="296" y="7" width="53" height="14" fill="#ECE9D8" />
</g>
<text x="303.5" y="18" fill="#FF0000" font-size="10.5" text-anchor="start" font-weight="normal" textLength="38.0" lengthAdjust="spacingAndGlyphs">HA M30</text>
<g shape-rendering="crispEdges">
<rect x="349" y="6" width="55" height="16" fill="#000" />
<rect x="350" y="7" width="53" height="14" fill="#ECE9D8" />
</g>
<text x="357.2" y="18" fill="#808080" font-size="10.5" text-anchor="start" font-weight="normal" textLength="36.8" lengthAdjust="spacingAndGlyphs">T3 - NN</text>
<g shape-rendering="crispEdges">
<rect x="403" y="6" width="69" height="16" fill="#000" />
<rect x="404" y="7" width="67" height="14" fill="#ECE9D8" />
</g>
<text x="415.7" y="18" fill="#808080" font-size="10.5" text-anchor="start" font-weight="normal" textLength="45.4" lengthAdjust="spacingAndGlyphs">FIBS OFF</text>
<g shape-rendering="crispEdges">
<rect x="471" y="6" width="69" height="16" fill="#000" />
<rect x="472" y="7" width="67" height="14" fill="#ECE9D8" />
</g>
<text x="488.5" y="18" fill="#000000" font-size="10.5" text-anchor="start" font-weight="normal" textLength="33.0" lengthAdjust="spacingAndGlyphs">Broker</text>
<g shape-rendering="crispEdges">
<rect x="539" y="6" width="69" height="16" fill="#000" />
<rect x="540" y="7" width="67" height="14" fill="#ECE9D8" />
</g>
<text x="557.2" y="18" fill="#FF0000" font-size="10.5" text-anchor="start" font-weight="normal" textLength="35.5" lengthAdjust="spacingAndGlyphs">Weekly</text>
<g shape-rendering="crispEdges">
<rect x="607" y="6" width="69" height="16" fill="#000" />
<rect x="608" y="7" width="67" height="14" fill="#ECE9D8" />
</g>
<text x="623.2" y="18" fill="#FF0000" font-size="10.5" text-anchor="start" font-weight="normal" textLength="35.3" lengthAdjust="spacingAndGlyphs">Typical</text>
<g shape-rendering="crispEdges">
<rect x="675" y="6" width="69" height="16" fill="#000" />
<rect x="676" y="7" width="67" height="14" fill="#ECE9D8" />
</g>
<text x="688.3" y="18" fill="#000000" font-size="10.5" text-anchor="start" font-weight="normal" textLength="42.0" lengthAdjust="spacingAndGlyphs">cur.Pivot</text>
<g shape-rendering="crispEdges">
<rect x="743" y="6" width="71" height="16" fill="#000" />
<rect x="744" y="7" width="69" height="14" fill="#ECE9D8" />
</g>
<text x="747.7" y="18" fill="#808080" font-size="10.5" text-anchor="start" font-weight="normal" textLength="59.2" lengthAdjust="spacingAndGlyphs">Short DSMA</text>
<g shape-rendering="crispEdges">
<rect x="813" y="6" width="71" height="16" fill="#000" />
<rect x="814" y="7" width="69" height="14" fill="#ECE9D8" />
</g>
<text x="818.9" y="18" fill="#808080" font-size="10.5" text-anchor="start" font-weight="normal" textLength="57.2" lengthAdjust="spacingAndGlyphs">Long DSMA</text>
<g shape-rendering="crispEdges">
<rect x="883" y="6" width="55" height="16" fill="#000" />
<rect x="884" y="7" width="53" height="14" fill="#ECE9D8" />
</g>
<text x="888.5" y="18" fill="#808080" font-size="10.5" text-anchor="start" font-weight="normal" textLength="44.5" lengthAdjust="spacingAndGlyphs">Scale Fix</text>
<g shape-rendering="crispEdges">
<rect x="937" y="6" width="28" height="16" fill="#000" />
<rect x="938" y="7" width="26" height="14" fill="#ECE9D8" />
</g>
<text x="940.7" y="18" fill="#0000FF" font-size="10.5" text-anchor="start" font-weight="normal" textLength="20.4" lengthAdjust="spacingAndGlyphs">M30</text>
<g shape-rendering="crispEdges">
<rect x="964" y="6" width="28" height="16" fill="#000" />
<rect x="965" y="7" width="26" height="14" fill="#ECE9D8" />
</g>
<text x="975.1" y="18" fill="#0000FF" font-size="10.5" text-anchor="start" font-weight="normal" textLength="6.0" lengthAdjust="spacingAndGlyphs">0</text>
<g shape-rendering="crispEdges">
<rect x="991" y="6" width="27" height="16" fill="#000" />
<rect x="992" y="7" width="25" height="14" fill="#ECE9D8" />
</g>
<text x="998.0" y="18" fill="#0000FF" font-size="10.5" text-anchor="start" font-weight="normal" textLength="12.5" lengthAdjust="spacingAndGlyphs">&lt; ]</text>
<g shape-rendering="crispEdges">
<rect x="1017" y="6" width="28" height="16" fill="#000" />
<rect x="1018" y="7" width="26" height="14" fill="#ECE9D8" />
</g>
<text x="1021.4" y="18" fill="#FF0000" font-size="10.5" text-anchor="start" font-weight="normal" textLength="18.5" lengthAdjust="spacingAndGlyphs">v2v</text>
<g shape-rendering="crispEdges">
<rect x="1044" y="6" width="28" height="16" fill="#000" />
<rect x="1045" y="7" width="26" height="14" fill="#ECE9D8" />
</g>
<text x="1051.4" y="18" fill="#2E8B00" font-size="10.5" text-anchor="start" font-weight="normal" textLength="12.9" lengthAdjust="spacingAndGlyphs">&lt; ]</text>
<g shape-rendering="crispEdges">
<rect x="1071" y="6" width="28" height="16" fill="#000" />
<rect x="1072" y="7" width="26" height="14" fill="#ECE9D8" />
</g>
<text x="1082.0" y="18" fill="#2E8B00" font-size="10.5" text-anchor="start" font-weight="normal" textLength="6.0" lengthAdjust="spacingAndGlyphs">0</text>
<g shape-rendering="crispEdges">
<rect x="1023" y="6" width="1" height="18" fill="#00EB78" />
</g>
<path d="M1068.5,5.5 L1078,5.5 L1073.2,10.5 Z" fill="#FFD9A0"/>
<g shape-rendering="crispEdges">
<rect x="6" y="386" width="70" height="16" fill="#000" />
<rect x="7" y="387" width="68" height="14" fill="#ECE9D8" />
</g>
<text x="11.0" y="398" fill="#0000FF" font-size="10.5" text-anchor="start" font-weight="normal" textLength="59.7" lengthAdjust="spacingAndGlyphs">RSX haDelta</text>
<g shape-rendering="crispEdges">
<rect x="75" y="386" width="28" height="16" fill="#000" />
<rect x="76" y="387" width="26" height="14" fill="#ECE9D8" />
</g>
<text x="82.5" y="398" fill="#FF0000" font-size="10.5" text-anchor="start" font-weight="normal" textLength="12.5" lengthAdjust="spacingAndGlyphs">H1</text>
<g shape-rendering="crispEdges">
<rect x="6" y="491" width="110" height="16" fill="#000" />
<rect x="7" y="492" width="108" height="14" fill="#ECE9D8" />
</g>
<text x="12.1" y="503" fill="#0000FF" font-size="10.5" text-anchor="start" font-weight="normal" textLength="98.2" lengthAdjust="spacingAndGlyphs">Phase Accumulation</text>
<g shape-rendering="crispEdges">
<rect x="115" y="491" width="28" height="16" fill="#000" />
<rect x="116" y="492" width="26" height="14" fill="#ECE9D8" />
</g>
<text x="119.0" y="503" fill="#808080" font-size="10.5" text-anchor="start" font-weight="normal" textLength="20.0" lengthAdjust="spacingAndGlyphs">MTF</text>
<text x="107" y="398" fill="#fff" font-size="10" text-rendering="geometricPrecision" textLength="181" lengthAdjust="spacingAndGlyphs">( 9,2,9 <tspan fill="#F0B060">|</tspan> 4 <tspan fill="#F0B060">|</tspan> 21 ) 27.63351 1.00000 1.00000</text>
<text x="147.5" y="503" fill="#fff" font-size="10" text-anchor="start" font-weight="normal" text-rendering="geometricPrecision" textLength="120" lengthAdjust="spacingAndGlyphs">( 7,2,0.0 ) -0.00073 -0.00073</text>
<path d="M6,11 L14,11 L10,15.5 Z" fill="#fff"/>
<text x="18.5" y="17" fill="#fff" font-size="10" text-anchor="start" font-weight="normal" text-rendering="geometricPrecision" textLength="61.5" lengthAdjust="spacingAndGlyphs">USDCAD,M30</text>
<text x="7.7" y="41" fill="#00004B" font-size="10" text-anchor="start" font-weight="normal" text-rendering="geometricPrecision" textLength="23" lengthAdjust="spacingAndGlyphs">AWR:</text>
<text x="35" y="41" fill="#00004B" font-size="10" text-anchor="start" font-weight="normal" text-rendering="geometricPrecision" textLength="47.5" lengthAdjust="spacingAndGlyphs">6w / Range</text>
<text x="92" y="41" fill="#00004B" font-size="10" text-anchor="start" font-weight="normal" text-rendering="geometricPrecision" textLength="18.5" lengthAdjust="spacingAndGlyphs">Prev</text>
<text x="128.7" y="41" fill="#00004B" font-size="10" text-anchor="start" font-weight="normal" text-rendering="geometricPrecision" textLength="21" lengthAdjust="spacingAndGlyphs">6-Wk</text>
<text x="171.2" y="41" fill="#00004B" font-size="10" text-anchor="start" font-weight="normal" text-rendering="geometricPrecision" textLength="21" lengthAdjust="spacingAndGlyphs">9-Wk</text>
<text x="220.6" y="41" fill="#00004B" font-size="10" text-anchor="start" font-weight="normal" text-rendering="geometricPrecision" textLength="68" lengthAdjust="spacingAndGlyphs">High / Mid / Low</text>
<text x="7.7" y="51" fill="#00004B" font-size="10" text-anchor="start" font-weight="normal" text-rendering="geometricPrecision" textLength="19" lengthAdjust="spacingAndGlyphs">Pips:</text>
<text x="35.6" y="51" fill="#FFFF00" font-size="10" text-anchor="start" font-weight="normal" text-rendering="geometricPrecision" textLength="10" lengthAdjust="spacingAndGlyphs">48</text>
<rect x="49" y="43" width="1" height="10" fill="#A8C800" shape-rendering="crispEdges"/>
<text x="49.1" y="51" fill="#E8A020" font-size="10" text-anchor="start" font-weight="normal" text-rendering="geometricPrecision" >|</text>
<text x="55.6" y="51" fill="#FFFF00" font-size="10" text-anchor="start" font-weight="normal" text-rendering="geometricPrecision" textLength="10" lengthAdjust="spacingAndGlyphs">76</text>
<text x="91" y="51" fill="#E6F5FF" font-size="10" text-anchor="start" font-weight="normal" text-rendering="geometricPrecision" textLength="10" lengthAdjust="spacingAndGlyphs">94</text>
<text x="129.4" y="51" fill="#E6F5FF" font-size="10" text-anchor="start" font-weight="normal" text-rendering="geometricPrecision" textLength="15" lengthAdjust="spacingAndGlyphs">128</text>
<text x="171" y="51" fill="#DAA520" font-size="10" text-anchor="start" font-weight="normal" text-rendering="geometricPrecision" textLength="15" lengthAdjust="spacingAndGlyphs">105</text>
<text x="221" y="51" fill="#E6F5FF" font-size="10" text-anchor="start" font-weight="normal" text-rendering="geometricPrecision" textLength="10" lengthAdjust="spacingAndGlyphs">70</text>
<rect x="238" y="43" width="1" height="10" fill="#4F9BE8" shape-rendering="crispEdges"/>
<text x="238.1" y="51" fill="#E8A848" font-size="10" text-anchor="start" font-weight="normal" text-rendering="geometricPrecision" >|</text>
<text x="247" y="51" fill="#E6F5FF" font-size="10" text-anchor="start" font-weight="normal" text-rendering="geometricPrecision" textLength="13.5" lengthAdjust="spacingAndGlyphs">-46</text>
<rect x="267" y="43" width="1" height="10" fill="#4F9BE8" shape-rendering="crispEdges"/>
<text x="267.1" y="51" fill="#E8A848" font-size="10" text-anchor="start" font-weight="normal" text-rendering="geometricPrecision" >|</text>
<text x="275.6" y="51" fill="#E6F5FF" font-size="10" text-anchor="start" font-weight="normal" text-rendering="geometricPrecision" textLength="13.5" lengthAdjust="spacingAndGlyphs">-22</text>
<text x="111" y="66" fill="#FFFACD" font-size="9.5" text-anchor="start" font-weight="normal" text-rendering="geometricPrecision" textLength="12.5" lengthAdjust="spacingAndGlyphs">W1</text>
<g shape-rendering="crispEdges">
<rect x="1088" y="166" width="10" height="1" fill="#00005A" />
<rect x="1098.5" y="160.5" width="41" height="12" fill="none" stroke="#00005A" stroke-width="1"/>
</g>
<text x="1100.3" y="171" fill="#00005A" font-size="11.3" text-anchor="start" font-weight="normal" text-rendering="geometricPrecision" textLength="38.3" lengthAdjust="spacingAndGlyphs">1.32478</text>
<text x="1300.5" y="400" fill="#EE82C8" font-size="12" text-anchor="end" font-weight="bold" text-rendering="geometricPrecision" textLength="125" lengthAdjust="spacingAndGlyphs">V ( M1 ): 1.6 / 2.4 / 7.3</text>
<text x="1300.5" y="415" fill="#FF7F50" font-size="12" text-anchor="end" font-weight="bold" text-rendering="geometricPrecision" textLength="118" lengthAdjust="spacingAndGlyphs">Last: 976 / 829 / 85%</text>
<text x="1300.5" y="430" fill="#FF7F50" font-size="12" text-anchor="end" font-weight="bold" text-rendering="geometricPrecision" textLength="119" lengthAdjust="spacingAndGlyphs">Past: 979 / 920 / 94%</text>
<text x="1300.5" y="445" fill="#FF7F50" font-size="12" text-anchor="end" font-weight="bold" text-rendering="geometricPrecision" textLength="121" lengthAdjust="spacingAndGlyphs">Prev: 981 / 498 / 51%</text>
<text x="1300.5" y="460" fill="#FF7F50" font-size="12" text-anchor="end" font-weight="bold" text-rendering="geometricPrecision" textLength="107.5" lengthAdjust="spacingAndGlyphs">W: 981 / 669 / 68%</text>
</svg>
</body></html>
